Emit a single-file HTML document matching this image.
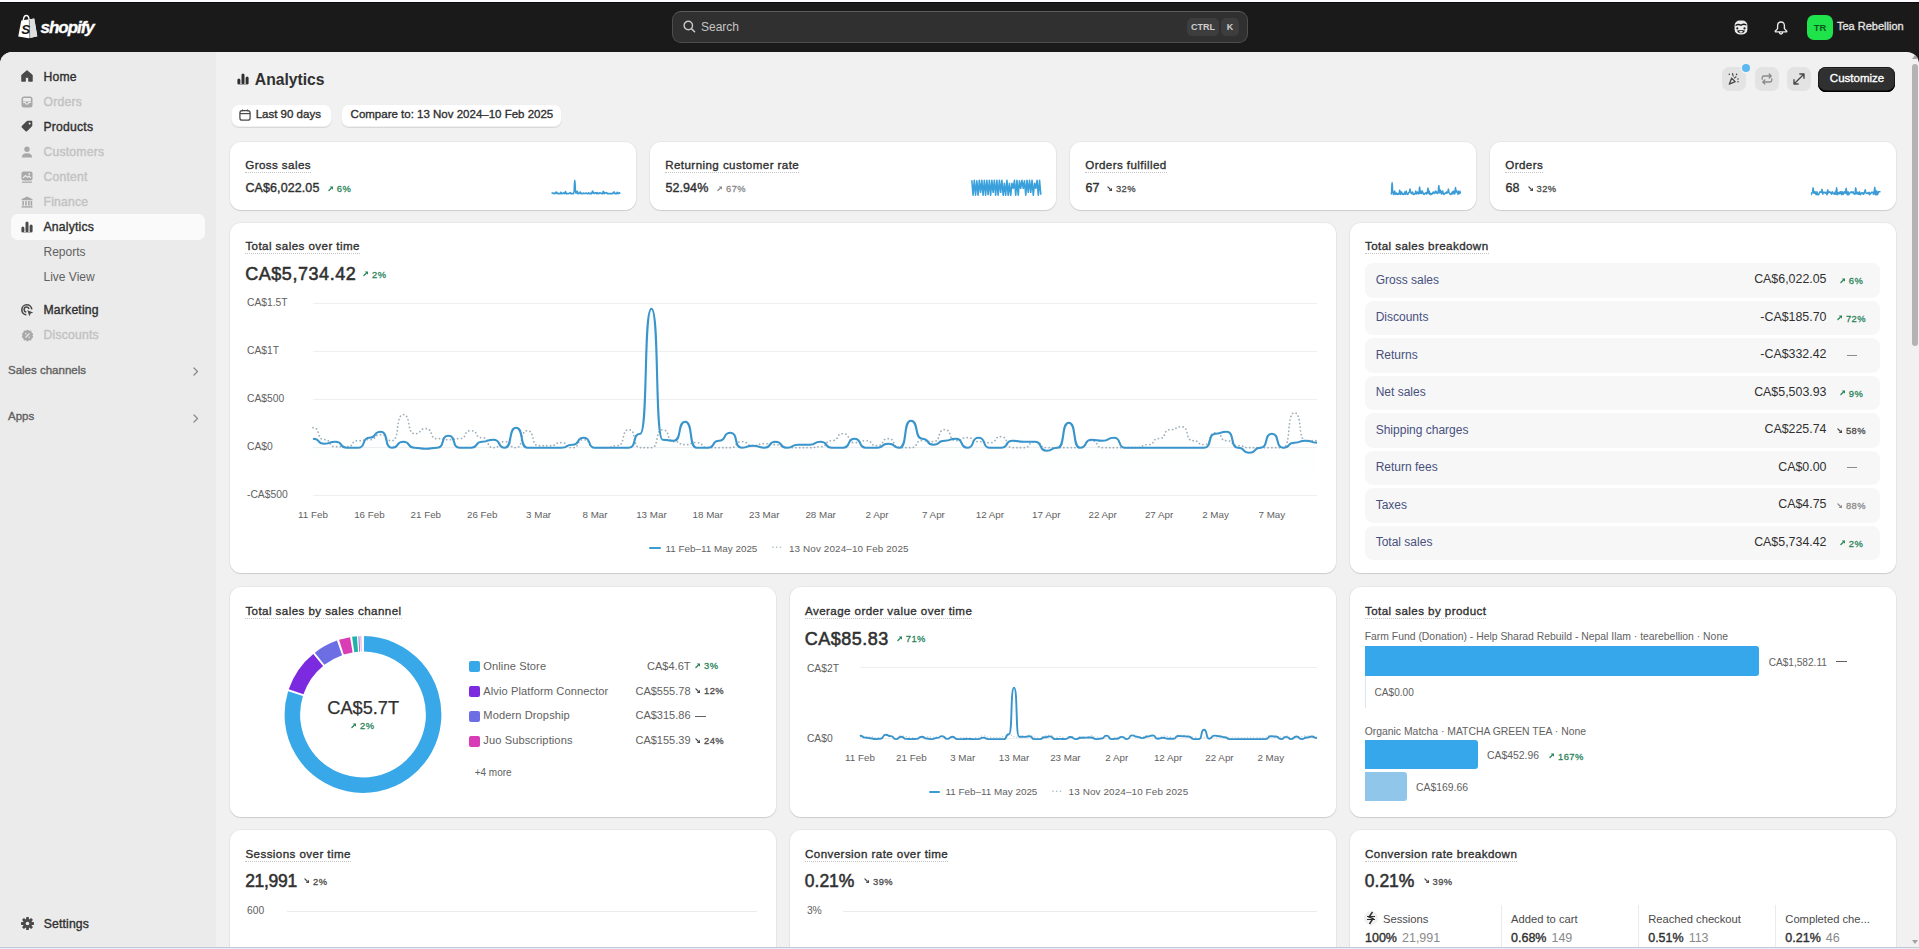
<!DOCTYPE html><html><head><meta charset="utf-8"><style>
*{box-sizing:border-box;margin:0;padding:0}
html,body{width:1919px;height:949px;overflow:hidden;background:#fcfbfd;font-family:"Liberation Sans",sans-serif;}
.t{position:absolute;line-height:1;white-space:nowrap}
.a{position:absolute}
.card{position:absolute;background:#fff;border-radius:11px;box-shadow:0 1px 0 rgba(26,26,26,.08),0 0 0 1px rgba(0,0,0,.035),0 1px 2px rgba(0,0,0,.05)}
.dot{border-bottom:1px dotted #c4c4c4;padding-bottom:1px}
.brow{position:absolute;left:1365px;width:515px;height:34px;background:#f7f7f7;border-radius:8px;box-shadow:0 1px 0 rgba(0,0,0,.03)}
svg{position:absolute;overflow:visible}
</style></head><body>
<div class="a" style="left:0;top:2px;width:1919px;height:50px;background:#1a1a1a;border-top:1px solid #0c0a0e"></div>
<div class="a" style="left:0;top:52px;width:1919px;height:897px;background:#1a1a1a"></div>
<div class="a" style="left:0;top:52px;width:1919px;height:897px;background:#f1f1f1;border-radius:12px 12px 0 0"></div>
<div class="a" style="left:0;top:52px;width:215.6px;height:897px;background:#ebebeb;border-radius:12px 0 0 0"></div>
<div class="a" style="left:1912px;top:64px;width:6px;height:282px;background:#b3b3b3;border-radius:3px"></div>
<div class="a" style="left:1912px;top:55px;width:0;height:0;border-left:3px solid transparent;border-right:3px solid transparent;border-bottom:4px solid #a3a3a3"></div>
<svg style="left:17px;top:14px" width="23" height="26" viewBox="0 0 23 26">
<path d="M1.2 22.4 L4.3 6.6 L17.2 4.6 L20.3 22.2 L11.9 24.3 Z" fill="#fff"/>
<path d="M12.6 5.6 L17.2 4.6 L20.3 22.2 L12.9 24.1 Z" fill="#dedede"/>
<path d="M12.3 5.5 L12.7 24.2" stroke="#1a1a1a" stroke-width="0.5"/>
<path d="M6.3 6.7 C6.5 3.3 7.8 1.5 9.4 1.5 C11 1.5 11.9 3.2 12.1 5.8" stroke="#fff" stroke-width="1.4" fill="none"/>
<text x="4.2" y="20.3" font-family="Liberation Sans" font-weight="700" font-style="italic" font-size="13.5" fill="#1a1a1a">S</text>
</svg>
<div class="t" style="left:40.6px;top:18.61px;font-size:17px;color:#fff;font-weight:700;font-style:italic;letter-spacing:-1.05px;-webkit-text-stroke:0.35px #fff">shopify</div>

<div class="a" style="left:672px;top:11px;width:576px;height:32px;background:#303030;border:1px solid #4d4d4d;border-top-color:#5c5c5c;border-radius:9px"></div>
<svg style="left:683px;top:20px" width="13" height="13" viewBox="0 0 13 13"><circle cx="5.3" cy="5.5" r="4.2" stroke="#c9c9c9" stroke-width="1.4" fill="none"/><path d="M8.4 8.6 L11.6 11.8" stroke="#c9c9c9" stroke-width="1.5" stroke-linecap="round"/></svg>
<div class="t" style="left:701px;top:20.84px;font-size:12px;color:#c4c4c4;font-weight:400;">Search</div>

<div class="a" style="left:1187px;top:18px;width:32px;height:18px;background:#3d3d3d;border-radius:5px"></div>
<div class="t" style="left:1203px;transform:translateX(-50%);top:22.88px;font-size:9px;color:#cfcfcf;font-weight:700;">CTRL</div>

<div class="a" style="left:1221px;top:18px;width:18px;height:18px;background:#3d3d3d;border-radius:5px"></div>
<div class="t" style="left:1230px;transform:translateX(-50%);top:22.88px;font-size:9px;color:#cfcfcf;font-weight:700;">K</div>

<svg style="left:1734px;top:19.5px" width="14" height="15" viewBox="0 0 14 15">
<rect x="0.6" y="0.6" width="12.8" height="13.8" rx="5" fill="#ececec"/>
<path d="M1.5 4.8 Q4 3 7 4.6 Q9.6 2.6 12.5 4.4 L12.5 5.6 Q9.6 4.2 7 5.9 Q4 4.4 1.5 6.2 Z" fill="#1a1a1a"/>
<circle cx="3.3" cy="8.4" r="1.05" fill="#1a1a1a"/><circle cx="10.5" cy="8.4" r="1.05" fill="#1a1a1a"/>
<path d="M3.2 10.6 Q7 9.6 10.8 10.6 Q10.4 13.2 7 13.2 Q3.6 13.2 3.2 10.6 Z" fill="#1a1a1a"/>
<ellipse cx="7" cy="11.7" rx="1.8" ry="1" fill="#ececec"/></svg>
<svg style="left:1773.5px;top:20.5px" width="14" height="14" viewBox="0 0 14 14">
<path d="M7 1 C4.9 1 3.6 2.6 3.6 4.7 L3.6 7.6 L1.4 10 C1 10.5 1.3 10.9 1.9 10.9 L12.1 10.9 C12.7 10.9 13 10.5 12.6 10 L10.4 7.6 L10.4 4.7 C10.4 2.6 9.1 1 7 1 Z" stroke="#e8e8e8" stroke-width="1.35" fill="none" stroke-linejoin="round"/>
<path d="M5.4 11 L5.4 11.6 Q5.4 13 7 13 Q8.6 13 8.6 11.6 L8.6 11" stroke="#e8e8e8" stroke-width="1.3" fill="none"/></svg>
<div class="a" style="left:1807px;top:15px;width:26px;height:25px;background:#1fe34a;border-radius:7px"></div>
<div class="t" style="left:1820px;transform:translateX(-50%);top:22.96px;font-size:9.5px;color:#0b5a1c;font-weight:700;">TR</div>

<div class="t" style="left:1837px;top:20.69px;font-size:11px;color:#e3e3e3;font-weight:400;-webkit-text-stroke:0.330px #e3e3e3;">Tea Rebellion</div>

<div class="a" style="left:11px;top:214px;width:194px;height:26px;background:#fafafa;border-radius:6.5px"></div>
<svg style="left:21px;top:70px" width="12" height="12" viewBox="0 0 12 12"><path d="M6 0.6 L11.3 5 L11.3 11.3 L7.6 11.3 L7.6 8 Q6 6.6 4.4 8 L4.4 11.3 L0.7 11.3 L0.7 5 Z" fill="#4a4a4a" stroke="#4a4a4a" stroke-width="0.8" stroke-linejoin="round"/></svg>
<div class="t" style="left:43.5px;top:70.57px;font-size:12.2px;color:#303030;font-weight:400;-webkit-text-stroke:0.366px #303030;letter-spacing:0.2px">Home</div>

<svg style="left:21px;top:96px" width="12" height="12" viewBox="0 0 12 12"><rect x="0.5" y="0.5" width="11" height="11" rx="2.5" fill="#a8a8a8"/><path d="M2 6.5 L4.2 6.5 L5 8 L7 8 L7.8 6.5 L10 6.5" stroke="#ebebeb" stroke-width="1.2" fill="none"/><rect x="2" y="2" width="8" height="3.5" fill="#ebebeb" rx="1"/></svg>
<div class="t" style="left:43.5px;top:95.57px;font-size:12.2px;color:#c2c2c2;font-weight:400;-webkit-text-stroke:0.366px #c2c2c2;letter-spacing:0.2px">Orders</div>

<svg style="left:21px;top:120px" width="12" height="12" viewBox="0 0 12 12"><path d="M6.6 0.8 L10.5 0.8 Q11.3 0.8 11.3 1.6 L11.3 5.4 Q11.3 6 10.8 6.5 L6 11.3 Q5.3 11.9 4.6 11.3 L0.8 7.5 Q0.2 6.8 0.8 6.1 L5.6 1.3 Q6 0.8 6.6 0.8 Z" fill="#4a4a4a"/><circle cx="8.6" cy="3.4" r="1" fill="#ebebeb"/></svg>
<div class="t" style="left:43.5px;top:120.57px;font-size:12.2px;color:#303030;font-weight:400;-webkit-text-stroke:0.366px #303030;letter-spacing:0.2px">Products</div>

<svg style="left:21px;top:146px" width="12" height="12" viewBox="0 0 12 12"><circle cx="6" cy="3.2" r="2.7" fill="#a8a8a8"/><path d="M0.8 11.5 Q1 7.3 6 7.3 Q11 7.3 11.2 11.5 Z" fill="#a8a8a8"/></svg>
<div class="t" style="left:43.5px;top:145.67px;font-size:12.2px;color:#c2c2c2;font-weight:400;-webkit-text-stroke:0.366px #c2c2c2;letter-spacing:0.2px">Customers</div>

<svg style="left:21px;top:171px" width="12" height="12" viewBox="0 0 12 12"><rect x="0.5" y="0.5" width="11" height="9" rx="2" fill="#a8a8a8"/><path d="M2 7 L4.5 4.5 L6.5 6.5 L8 5 L10 7" stroke="#ebebeb" stroke-width="1.1" fill="none"/><circle cx="8.3" cy="3" r="0.9" fill="#ebebeb"/><rect x="1" y="10.6" width="10" height="1.2" fill="#a8a8a8"/></svg>
<div class="t" style="left:43.5px;top:170.87px;font-size:12.2px;color:#c2c2c2;font-weight:400;-webkit-text-stroke:0.366px #c2c2c2;letter-spacing:0.2px">Content</div>

<svg style="left:21px;top:196px" width="12" height="12" viewBox="0 0 12 12"><path d="M6 0.5 L11.5 3.2 L11.5 4.3 L0.5 4.3 L0.5 3.2 Z" fill="#a8a8a8"/><rect x="1.3" y="5" width="1.6" height="4.6" fill="#a8a8a8"/><rect x="4.2" y="5" width="1.6" height="4.6" fill="#a8a8a8"/><rect x="7.1" y="5" width="1.6" height="4.6" fill="#a8a8a8"/><rect x="9.6" y="5" width="1.6" height="4.6" fill="#a8a8a8"/><rect x="0.5" y="10.2" width="11" height="1.4" fill="#a8a8a8"/></svg>
<div class="t" style="left:43.5px;top:195.87px;font-size:12.2px;color:#c2c2c2;font-weight:400;-webkit-text-stroke:0.366px #c2c2c2;letter-spacing:0.2px">Finance</div>

<svg style="left:21px;top:221px" width="12" height="12" viewBox="0 0 12 12"><rect x="0.4" y="5.6" width="3" height="6" rx="1.5" fill="#4a4a4a"/><rect x="4.5" y="0.4" width="3" height="11.2" rx="1.5" fill="#4a4a4a"/><rect x="8.6" y="3.4" width="3" height="8.2" rx="1.5" fill="#4a4a4a"/><path d="M3.4 11.4 L4.5 11.4 M7.5 11.4 L8.6 11.4" stroke="#4a4a4a" stroke-width="0.8"/></svg>
<div class="t" style="left:43.5px;top:220.87px;font-size:12.2px;color:#303030;font-weight:400;-webkit-text-stroke:0.366px #303030;letter-spacing:0.2px">Analytics</div>

<svg style="left:21px;top:304px" width="13" height="13" viewBox="0 0 13 13"><path d="M10.8 5.4 A5 5 0 1 0 5.4 10.8" stroke="#4a4a4a" stroke-width="1.6" fill="none"/><path d="M7.9 5.2 A2.4 2.4 0 1 0 5.3 7.9" stroke="#4a4a4a" stroke-width="1.5" fill="none"/><path d="M6.3 6.3 L12.3 8.4 L9.6 9.6 L8.4 12.3 Z" fill="#4a4a4a"/></svg>
<div class="t" style="left:43.5px;top:304.37px;font-size:12.2px;color:#303030;font-weight:400;-webkit-text-stroke:0.366px #303030;letter-spacing:0.2px">Marketing</div>

<svg style="left:21px;top:329px" width="13" height="13" viewBox="0 0 13 13"><path d="M6.5 0.5 L8.1 1.7 L10.1 1.6 L10.6 3.5 L12.2 4.7 L11.5 6.5 L12.2 8.3 L10.6 9.5 L10.1 11.4 L8.1 11.3 L6.5 12.5 L4.9 11.3 L2.9 11.4 L2.4 9.5 L0.8 8.3 L1.5 6.5 L0.8 4.7 L2.4 3.5 L2.9 1.6 L4.9 1.7 Z" fill="#a8a8a8"/><path d="M4.5 8.5 L8.5 4.5" stroke="#ebebeb" stroke-width="1.1"/><circle cx="4.8" cy="4.8" r="0.8" fill="#ebebeb"/><circle cx="8.2" cy="8.2" r="0.8" fill="#ebebeb"/></svg>
<div class="t" style="left:43.5px;top:329.07px;font-size:12.2px;color:#c2c2c2;font-weight:400;-webkit-text-stroke:0.366px #c2c2c2;letter-spacing:0.2px">Discounts</div>

<div class="t" style="left:43.5px;top:245.64px;font-size:12px;color:#616161;font-weight:400;">Reports</div>

<div class="t" style="left:43.5px;top:270.84px;font-size:12px;color:#616161;font-weight:400;">Live View</div>

<div class="t" style="left:8px;top:365.47px;font-size:11.5px;color:#616161;font-weight:400;-webkit-text-stroke:0.345px #616161;">Sales channels</div>

<div class="t" style="left:8px;top:411.37px;font-size:11.5px;color:#616161;font-weight:400;-webkit-text-stroke:0.345px #616161;">Apps</div>

<svg style="left:192px;top:367.0px" width="8" height="9" viewBox="0 0 8 9"><path d="M2 1 L5.5 4.5 L2 8" stroke="#8a8a8a" stroke-width="1.3" fill="none" stroke-linecap="round" stroke-linejoin="round"/></svg>
<svg style="left:192px;top:414.0px" width="8" height="9" viewBox="0 0 8 9"><path d="M2 1 L5.5 4.5 L2 8" stroke="#8a8a8a" stroke-width="1.3" fill="none" stroke-linecap="round" stroke-linejoin="round"/></svg>
<svg style="left:20.5px;top:916.5px" width="13" height="13" viewBox="0 0 13 13"><rect x="5.1" y="0" width="2.8" height="3" rx="0.6" fill="#4a4a4a" transform="rotate(0 6.5 6.5)"/><rect x="5.1" y="0" width="2.8" height="3" rx="0.6" fill="#4a4a4a" transform="rotate(45 6.5 6.5)"/><rect x="5.1" y="0" width="2.8" height="3" rx="0.6" fill="#4a4a4a" transform="rotate(90 6.5 6.5)"/><rect x="5.1" y="0" width="2.8" height="3" rx="0.6" fill="#4a4a4a" transform="rotate(135 6.5 6.5)"/><rect x="5.1" y="0" width="2.8" height="3" rx="0.6" fill="#4a4a4a" transform="rotate(180 6.5 6.5)"/><rect x="5.1" y="0" width="2.8" height="3" rx="0.6" fill="#4a4a4a" transform="rotate(225 6.5 6.5)"/><rect x="5.1" y="0" width="2.8" height="3" rx="0.6" fill="#4a4a4a" transform="rotate(270 6.5 6.5)"/><rect x="5.1" y="0" width="2.8" height="3" rx="0.6" fill="#4a4a4a" transform="rotate(315 6.5 6.5)"/><circle cx="6.5" cy="6.5" r="4.6" fill="#4a4a4a"/><circle cx="6.5" cy="6.5" r="1.8" fill="#ebebeb"/></svg>
<div class="t" style="left:43.75px;top:918.27px;font-size:12.2px;color:#303030;font-weight:400;-webkit-text-stroke:0.366px #303030;letter-spacing:0.15px">Settings</div>

<svg style="left:237px;top:73px" width="12" height="12" viewBox="0 0 12 12"><rect x="0.4" y="5.6" width="3" height="6" rx="1.5" fill="#303030"/><rect x="4.5" y="0.4" width="3" height="11.2" rx="1.5" fill="#303030"/><rect x="8.6" y="3.4" width="3" height="8.2" rx="1.5" fill="#303030"/><path d="M3.4 11.4 L4.5 11.4 M7.5 11.4 L8.6 11.4" stroke="#303030" stroke-width="0.8"/></svg>
<div class="t" style="left:254.8px;top:71.71px;font-size:15.7px;color:#303030;font-weight:700;">Analytics</div>

<div class="a" style="left:231px;top:104px;width:101px;height:23px;background:#fff;border-radius:8px;box-shadow:0 1px 0 rgba(0,0,0,.10),inset 0 0 0 1px rgba(0,0,0,.06)"></div>
<svg style="left:239px;top:108.5px" width="12" height="12" viewBox="0 0 12 12"><rect x="0.9" y="1.6" width="10.2" height="9.6" rx="2.3" stroke="#4a4a4a" stroke-width="1.25" fill="none"/><path d="M1 4.6 L11 4.6" stroke="#4a4a4a" stroke-width="1.2"/><path d="M3.5 0.5 L3.5 2.3 M8.5 0.5 L8.5 2.3" stroke="#4a4a4a" stroke-width="1.1"/></svg>
<div class="t" style="left:255.7px;top:108.87px;font-size:11.5px;color:#303030;font-weight:400;-webkit-text-stroke:0.345px #303030;">Last 90 days</div>

<div class="a" style="left:340.5px;top:104px;width:221px;height:23px;background:#fff;border-radius:8px;box-shadow:0 1px 0 rgba(0,0,0,.10),inset 0 0 0 1px rgba(0,0,0,.06)"></div>
<div class="t" style="left:350.6px;top:108.87px;font-size:11.5px;color:#303030;font-weight:400;-webkit-text-stroke:0.345px #303030;">Compare to: 13 Nov 2024&#8211;10 Feb 2025</div>

<div class="a" style="left:1722px;top:67px;width:23.5px;height:24px;background:#e3e3e3;border-radius:7px"></div>
<div class="a" style="left:1755px;top:67px;width:23.5px;height:24px;background:#e3e3e3;border-radius:7px"></div>
<div class="a" style="left:1787px;top:67px;width:23.5px;height:24px;background:#e3e3e3;border-radius:7px"></div>
<svg style="left:1727px;top:72px" width="14" height="14" viewBox="0 0 14 14"><path d="M2.3 12.2 L4.6 6.2 L8.2 9.6 Z" stroke="#4a4a4a" stroke-width="1.3" fill="none" stroke-linejoin="round"/><circle cx="2.3" cy="2.2" r="0.8" fill="#4a4a4a"/><circle cx="9.6" cy="2.4" r="0.8" fill="#4a4a4a"/><circle cx="11" cy="7" r="0.8" fill="#4a4a4a"/><circle cx="11" cy="9.8" r="0.8" fill="#4a4a4a"/><path d="M5.5 1.5 L6.2 4 M9 4.8 L7.3 6" stroke="#4a4a4a" stroke-width="1.1" stroke-linecap="round"/></svg>
<div class="a" style="left:1741.5px;top:63.5px;width:8px;height:8px;background:#5cb8f2;border-radius:50%;box-shadow:0 0 0 1.5px #f1f1f1"></div>
<svg style="left:1760px;top:72px" width="14" height="14" viewBox="0 0 14 14"><path d="M2.2 7.2 L2.2 5.8 Q2.2 4 4 4 L11 4 M9.2 2 L11.2 4 L9.2 6" stroke="#8a8a8a" stroke-width="1.3" fill="none" stroke-linecap="round" stroke-linejoin="round"/><path d="M11.8 6.8 L11.8 8.2 Q11.8 10 10 10 L3 10 M4.8 12 L2.8 10 L4.8 8" stroke="#8a8a8a" stroke-width="1.3" fill="none" stroke-linecap="round" stroke-linejoin="round"/></svg>
<svg style="left:1792px;top:72px" width="14" height="14" viewBox="0 0 14 14"><path d="M2 12 L12 2 M7.8 2 L12 2 L12 6.2 M2 7.8 L2 12 L6.2 12" stroke="#4a4a4a" stroke-width="1.4" fill="none" stroke-linecap="round" stroke-linejoin="round"/></svg>
<div class="a" style="left:1818.3px;top:67px;width:77px;height:24.5px;background:#303030;border-radius:8px;box-shadow:inset 0 -1.6px 0 #000,inset 0 0 0 1px #1a1a1a,inset 0 1.5px 0 rgba(255,255,255,.14)"></div>
<div class="t" style="left:1857px;transform:translateX(-50%);top:73.27px;font-size:11.5px;color:#fff;font-weight:400;-webkit-text-stroke:0.345px #fff;">Customize</div>

<div class="card" style="left:230px;top:142px;width:405.5px;height:67.5px"></div>
<div class="t" style="left:245.2px;top:159.38px;font-size:11.6px;color:#303030;font-weight:400;-webkit-text-stroke:0.348px #303030;letter-spacing:0.42px"><span class="dot">Gross sales</span></div>

<div class="t" style="left:245.4px;top:181.92px;font-size:12.5px;color:#303030;font-weight:400;-webkit-text-stroke:0.375px #303030;letter-spacing:0.1px">CA$6,022.05</div>

<svg style="left:327.8px;top:185.79999999999998px" width="5.4" height="5.4" viewBox="0 0 5.4 5.4"><path d="M0.9 4.50 L3.20 2.2" stroke="#29845a" stroke-width="1.25" fill="none" stroke-linecap="round"/><path d="M1.73 0.4 L5.00 0.4 L5.00 3.67 Z" fill="#29845a"/></svg>
<div class="t" style="left:336.8px;top:184.24px;font-size:9.4px;color:#29845a;font-weight:400;-webkit-text-stroke:0.282px #29845a;letter-spacing:0.45px">6%</div>

<div class="card" style="left:650px;top:142px;width:405.5px;height:67.5px"></div>
<div class="t" style="left:665.2px;top:159.38px;font-size:11.6px;color:#303030;font-weight:400;-webkit-text-stroke:0.348px #303030;letter-spacing:0.42px"><span class="dot">Returning customer rate</span></div>

<div class="t" style="left:665.4px;top:181.92px;font-size:12.5px;color:#303030;font-weight:400;-webkit-text-stroke:0.375px #303030;letter-spacing:0.1px">52.94%</div>

<svg style="left:717.0px;top:185.79999999999998px" width="5.4" height="5.4" viewBox="0 0 5.4 5.4"><path d="M0.9 4.50 L3.20 2.2" stroke="#8a8a8a" stroke-width="1.25" fill="none" stroke-linecap="round"/><path d="M1.73 0.4 L5.00 0.4 L5.00 3.67 Z" fill="#8a8a8a"/></svg>
<div class="t" style="left:726.0px;top:184.24px;font-size:9.4px;color:#8a8a8a;font-weight:400;-webkit-text-stroke:0.282px #8a8a8a;letter-spacing:0.45px">67%</div>

<div class="card" style="left:1070px;top:142px;width:405.5px;height:67.5px"></div>
<div class="t" style="left:1085.2px;top:159.38px;font-size:11.6px;color:#303030;font-weight:400;-webkit-text-stroke:0.348px #303030;letter-spacing:0.42px"><span class="dot">Orders fulfilled</span></div>

<div class="t" style="left:1085.4px;top:181.92px;font-size:12.5px;color:#303030;font-weight:400;-webkit-text-stroke:0.375px #303030;letter-spacing:0.1px">67</div>

<svg style="left:1106.9px;top:185.79999999999998px" width="5.4" height="5.4" viewBox="0 0 5.4 5.4"><path d="M0.9 0.9 L3.20 3.20" stroke="#4a4a4a" stroke-width="1.25" fill="none" stroke-linecap="round"/><path d="M1.73 5.00 L5.00 5.00 L5.00 1.73 Z" fill="#4a4a4a"/></svg>
<div class="t" style="left:1115.9px;top:184.24px;font-size:9.4px;color:#4a4a4a;font-weight:400;-webkit-text-stroke:0.282px #4a4a4a;letter-spacing:0.45px">32%</div>

<div class="card" style="left:1490px;top:142px;width:405.5px;height:67.5px"></div>
<div class="t" style="left:1505.2px;top:159.38px;font-size:11.6px;color:#303030;font-weight:400;-webkit-text-stroke:0.348px #303030;letter-spacing:0.42px"><span class="dot">Orders</span></div>

<div class="t" style="left:1505.4px;top:181.92px;font-size:12.5px;color:#303030;font-weight:400;-webkit-text-stroke:0.375px #303030;letter-spacing:0.1px">68</div>

<svg style="left:1527.5px;top:185.79999999999998px" width="5.4" height="5.4" viewBox="0 0 5.4 5.4"><path d="M0.9 0.9 L3.20 3.20" stroke="#4a4a4a" stroke-width="1.25" fill="none" stroke-linecap="round"/><path d="M1.73 5.00 L5.00 5.00 L5.00 1.73 Z" fill="#4a4a4a"/></svg>
<div class="t" style="left:1536.5px;top:184.24px;font-size:9.4px;color:#4a4a4a;font-weight:400;-webkit-text-stroke:0.282px #4a4a4a;letter-spacing:0.45px">32%</div>

<svg style="left:0;top:0" width="1919" height="949"><path d="M551.60,192.75C552.06,192.75 551.91,193.22 552.37,193.22C552.84,193.22 552.68,193.03 553.15,193.03C553.61,193.03 553.46,193.60 553.92,193.60C554.38,193.60 554.23,193.60 554.69,193.60C555.16,193.60 555.00,192.65 555.47,192.65C555.93,192.65 555.77,192.08 556.24,192.08C556.70,192.08 556.55,193.60 557.01,193.60C557.48,193.60 557.32,193.03 557.78,193.03C558.25,193.03 558.09,193.60 558.56,193.60C559.02,193.60 558.87,193.60 559.33,193.60C559.79,193.60 559.64,193.60 560.10,193.60C560.57,193.60 560.41,192.46 560.88,192.46C561.34,192.46 561.19,193.60 561.65,193.60C562.11,193.60 561.96,193.60 562.42,193.60C562.89,193.60 562.73,193.03 563.20,193.03C563.66,193.03 563.50,192.84 563.97,192.84C564.43,192.84 564.28,193.60 564.74,193.60C565.21,193.60 565.05,191.70 565.51,191.70C565.98,191.70 565.82,193.60 566.29,193.60C566.75,193.60 566.60,193.60 567.06,193.60C567.52,193.60 567.37,193.60 567.83,193.60C568.30,193.60 568.14,193.60 568.61,193.60C569.07,193.60 568.92,193.32 569.38,193.32C569.84,193.32 569.69,192.65 570.15,192.65C570.62,192.65 570.46,193.60 570.93,193.60C571.39,193.60 571.24,193.60 571.70,193.60C572.16,193.60 572.01,193.60 572.47,193.60C572.94,193.60 572.78,193.60 573.24,193.60C573.71,193.60 573.55,192.27 574.02,192.27C574.48,192.27 574.33,180.40 574.79,180.40C575.25,180.40 575.10,192.84 575.56,192.84C576.03,192.84 575.87,192.94 576.34,192.94C576.80,192.94 576.65,191.13 577.11,191.13C577.57,191.13 577.42,193.60 577.88,193.60C578.35,193.60 578.19,193.60 578.66,193.60C579.12,193.60 578.97,192.94 579.43,192.94C579.89,192.94 579.74,192.18 580.20,192.18C580.67,192.18 580.51,193.60 580.98,193.60C581.44,193.60 581.28,193.41 581.75,193.41C582.21,193.41 582.06,193.60 582.52,193.60C582.99,193.60 582.83,193.03 583.29,193.03C583.76,193.03 583.60,193.60 584.07,193.60C584.53,193.60 584.38,193.32 584.84,193.32C585.30,193.32 585.15,193.32 585.61,193.32C586.08,193.32 585.92,193.03 586.39,193.03C586.85,193.03 586.70,193.60 587.16,193.60C587.62,193.60 587.47,193.60 587.93,193.60C588.40,193.60 588.24,192.75 588.71,192.75C589.17,192.75 589.01,193.60 589.48,193.60C589.94,193.60 589.79,193.60 590.25,193.60C590.72,193.60 590.56,193.22 591.02,193.22C591.49,193.22 591.33,193.60 591.80,193.60C592.26,193.60 592.11,191.04 592.57,191.04C593.03,191.04 592.88,192.75 593.34,192.75C593.81,192.75 593.65,193.32 594.12,193.32C594.58,193.32 594.43,192.94 594.89,192.94C595.35,192.94 595.20,192.75 595.66,192.75C596.13,192.75 595.97,193.60 596.44,193.60C596.90,193.60 596.75,192.65 597.21,192.65C597.67,192.65 597.52,193.60 597.98,193.60C598.45,193.60 598.29,193.60 598.76,193.60C599.22,193.60 599.06,192.94 599.53,192.94C599.99,192.94 599.84,193.03 600.30,193.03C600.76,193.03 600.61,193.03 601.07,193.03C601.54,193.03 601.38,193.60 601.85,193.60C602.31,193.60 602.16,193.60 602.62,193.60C603.08,193.60 602.93,191.23 603.39,191.23C603.86,191.23 603.70,193.60 604.17,193.60C604.63,193.60 604.48,192.84 604.94,192.84C605.40,192.84 605.25,192.94 605.71,192.94C606.18,192.94 606.02,192.65 606.49,192.65C606.95,192.65 606.79,193.60 607.26,193.60C607.72,193.60 607.57,193.60 608.03,193.60C608.50,193.60 608.34,193.60 608.80,193.60C609.27,193.60 609.11,193.60 609.58,193.60C610.04,193.60 609.89,193.60 610.35,193.60C610.81,193.60 610.66,193.60 611.12,193.60C611.59,193.60 611.43,193.60 611.90,193.60C612.36,193.60 612.21,193.60 612.67,193.60C613.13,193.60 612.98,192.27 613.44,192.27C613.91,192.27 613.75,192.08 614.22,192.08C614.68,192.08 614.52,193.60 614.99,193.60C615.45,193.60 615.30,193.60 615.76,193.60C616.23,193.60 616.07,193.60 616.53,193.60C617.00,193.60 616.84,192.27 617.31,192.27C617.77,192.27 617.62,193.60 618.08,193.60C618.54,193.60 618.39,193.13 618.85,193.13C619.32,193.13 619.16,192.94 619.63,192.94C620.09,192.94 619.94,193.13 620.40,193.13" stroke="#3a9bd6" stroke-width="1.7" fill="none" stroke-linejoin="round"/></svg>
<svg style="left:0;top:0" width="1919" height="949"><path d="M971.80,180.30 L973.05,195.30 L974.31,180.30 L975.56,195.30 L976.82,180.80 L978.07,195.30 L979.33,180.30 L980.58,192.30 L981.84,180.30 L983.09,195.30 L984.35,180.30 L985.60,195.30 L986.85,180.30 L988.11,194.80 L989.36,180.30 L990.62,195.30 L991.87,180.30 L993.13,192.30 L994.38,180.30 L995.64,195.30 L996.89,180.30 L998.15,195.30 L999.40,180.30 L1000.65,192.30 L1001.91,180.30 L1003.16,195.30 L1004.42,183.30 L1005.67,195.30 L1006.93,180.30 L1008.18,195.30 L1009.44,183.30 L1010.69,195.30 L1011.95,183.30 L1013.20,188.30 L1014.45,180.30 L1015.71,195.30 L1016.96,180.30 L1018.22,195.30 L1019.47,180.80 L1020.73,188.30 L1021.98,180.30 L1023.24,188.30 L1024.49,180.80 L1025.75,195.30 L1027.00,180.30 L1028.25,192.30 L1029.51,180.30 L1030.76,192.30 L1032.02,180.30 L1033.27,195.30 L1034.53,183.30 L1035.78,188.30 L1037.04,180.30 L1038.29,195.30 L1039.55,180.30 L1040.80,194.80" stroke="#3aa0dc" stroke-width="1.6" fill="none" stroke-linejoin="round"/></svg>
<svg style="left:0;top:0" width="1919" height="949"><path d="M1390.80,193.00C1391.18,193.00 1391.06,194.00 1391.44,194.00C1391.82,194.00 1391.70,182.50 1392.08,182.50C1392.46,182.50 1392.34,191.00 1392.72,191.00C1393.11,191.00 1392.98,194.50 1393.36,194.50C1393.75,194.50 1393.62,194.50 1394.00,194.50C1394.39,194.50 1394.26,191.00 1394.64,191.00C1395.03,191.00 1394.90,193.50 1395.28,193.50C1395.67,193.50 1395.54,194.50 1395.92,194.50C1396.31,194.50 1396.18,193.00 1396.56,193.00C1396.95,193.00 1396.82,193.50 1397.20,193.50C1397.59,193.50 1397.46,194.50 1397.84,194.50C1398.23,194.50 1398.10,193.50 1398.48,193.50C1398.87,193.50 1398.74,194.00 1399.12,194.00C1399.51,194.00 1399.38,190.00 1399.77,190.00C1400.15,190.00 1400.02,194.50 1400.41,194.50C1400.79,194.50 1400.66,192.00 1401.05,192.00C1401.43,192.00 1401.30,192.00 1401.69,192.00C1402.07,192.00 1401.94,194.50 1402.33,194.50C1402.71,194.50 1402.58,194.00 1402.97,194.00C1403.35,194.00 1403.22,194.50 1403.61,194.50C1403.99,194.50 1403.86,193.50 1404.25,193.50C1404.63,193.50 1404.50,192.00 1404.89,192.00C1405.27,192.00 1405.14,194.50 1405.53,194.50C1405.91,194.50 1405.78,191.00 1406.17,191.00C1406.55,191.00 1406.42,193.50 1406.81,193.50C1407.19,193.50 1407.07,194.50 1407.45,194.50C1407.83,194.50 1407.71,194.00 1408.09,194.00C1408.47,194.00 1408.35,192.50 1408.73,192.50C1409.11,192.50 1408.99,192.50 1409.37,192.50C1409.75,192.50 1409.63,189.00 1410.01,189.00C1410.40,189.00 1410.27,192.00 1410.65,192.00C1411.04,192.00 1410.91,193.50 1411.29,193.50C1411.68,193.50 1411.55,193.50 1411.93,193.50C1412.32,193.50 1412.19,192.00 1412.57,192.00C1412.96,192.00 1412.83,194.50 1413.21,194.50C1413.60,194.50 1413.47,194.00 1413.85,194.00C1414.24,194.00 1414.11,194.50 1414.49,194.50C1414.88,194.50 1414.75,193.50 1415.13,193.50C1415.52,193.50 1415.39,191.00 1415.77,191.00C1416.16,191.00 1416.03,194.00 1416.41,194.00C1416.80,194.00 1416.67,193.00 1417.06,193.00C1417.44,193.00 1417.31,192.00 1417.70,192.00C1418.08,192.00 1417.95,194.00 1418.34,194.00C1418.72,194.00 1418.59,193.50 1418.98,193.50C1419.36,193.50 1419.23,187.00 1419.62,187.00C1420.00,187.00 1419.87,193.50 1420.26,193.50C1420.64,193.50 1420.51,191.00 1420.90,191.00C1421.28,191.00 1421.15,193.50 1421.54,193.50C1421.92,193.50 1421.79,191.00 1422.18,191.00C1422.56,191.00 1422.43,192.50 1422.82,192.50C1423.20,192.50 1423.07,194.00 1423.46,194.00C1423.84,194.00 1423.71,194.50 1424.10,194.50C1424.48,194.50 1424.36,193.50 1424.74,193.50C1425.12,193.50 1425.00,193.50 1425.38,193.50C1425.76,193.50 1425.64,192.50 1426.02,192.50C1426.40,192.50 1426.28,194.00 1426.66,194.00C1427.04,194.00 1426.92,193.00 1427.30,193.00C1427.69,193.00 1427.56,188.00 1427.94,188.00C1428.33,188.00 1428.20,193.50 1428.58,193.50C1428.97,193.50 1428.84,191.00 1429.22,191.00C1429.61,191.00 1429.48,194.50 1429.86,194.50C1430.25,194.50 1430.12,193.50 1430.50,193.50C1430.89,193.50 1430.76,194.50 1431.14,194.50C1431.53,194.50 1431.40,193.50 1431.78,193.50C1432.17,193.50 1432.04,194.00 1432.42,194.00C1432.81,194.00 1432.68,192.00 1433.06,192.00C1433.45,192.00 1433.32,192.50 1433.70,192.50C1434.09,192.50 1433.96,193.50 1434.34,193.50C1434.73,193.50 1434.60,192.00 1434.99,192.00C1435.37,192.00 1435.24,191.00 1435.63,191.00C1436.01,191.00 1435.88,193.00 1436.27,193.00C1436.65,193.00 1436.52,192.00 1436.91,192.00C1437.29,192.00 1437.16,193.50 1437.55,193.50C1437.93,193.50 1437.80,192.00 1438.19,192.00C1438.57,192.00 1438.44,185.50 1438.83,185.50C1439.21,185.50 1439.08,193.00 1439.47,193.00C1439.85,193.00 1439.72,190.00 1440.11,190.00C1440.49,190.00 1440.36,191.00 1440.75,191.00C1441.13,191.00 1441.00,194.00 1441.39,194.00C1441.77,194.00 1441.65,192.50 1442.03,192.50C1442.41,192.50 1442.29,191.00 1442.67,191.00C1443.05,191.00 1442.93,194.00 1443.31,194.00C1443.69,194.00 1443.57,194.50 1443.95,194.50C1444.33,194.50 1444.21,193.50 1444.59,193.50C1444.98,193.50 1444.85,193.00 1445.23,193.00C1445.62,193.00 1445.49,193.50 1445.87,193.50C1446.26,193.50 1446.13,192.00 1446.51,192.00C1446.90,192.00 1446.77,193.00 1447.15,193.00C1447.54,193.00 1447.41,192.50 1447.79,192.50C1448.18,192.50 1448.05,189.00 1448.43,189.00C1448.82,189.00 1448.69,193.00 1449.07,193.00C1449.46,193.00 1449.33,193.50 1449.71,193.50C1450.10,193.50 1449.97,194.50 1450.35,194.50C1450.74,194.50 1450.61,194.50 1450.99,194.50C1451.38,194.50 1451.25,193.50 1451.63,193.50C1452.02,193.50 1451.89,192.00 1452.28,192.00C1452.66,192.00 1452.53,194.00 1452.92,194.00C1453.30,194.00 1453.17,191.00 1453.56,191.00C1453.94,191.00 1453.81,193.00 1454.20,193.00C1454.58,193.00 1454.45,194.00 1454.84,194.00C1455.22,194.00 1455.09,187.50 1455.48,187.50C1455.86,187.50 1455.73,192.00 1456.12,192.00C1456.50,192.00 1456.37,191.00 1456.76,191.00C1457.14,191.00 1457.01,192.50 1457.40,192.50C1457.78,192.50 1457.65,194.50 1458.04,194.50C1458.42,194.50 1458.29,191.00 1458.68,191.00C1459.06,191.00 1458.94,193.50 1459.32,193.50C1459.70,193.50 1459.58,193.50 1459.96,193.50C1460.34,193.50 1460.22,191.00 1460.60,191.00" stroke="#3a9bd6" stroke-width="1.6" fill="none" stroke-linejoin="round"/></svg>
<svg style="left:0;top:0" width="1919" height="949"><path d="M1811.20,194.80C1811.58,194.80 1811.45,192.80 1811.84,192.80C1812.22,192.80 1812.09,192.80 1812.47,192.80C1812.85,192.80 1812.73,187.80 1813.11,187.80C1813.49,187.80 1813.36,192.80 1813.74,192.80C1814.12,192.80 1814.00,193.30 1814.38,193.30C1814.76,193.30 1814.63,191.80 1815.01,191.80C1815.40,191.80 1815.27,193.30 1815.65,193.30C1816.03,193.30 1815.90,194.80 1816.29,194.80C1816.67,194.80 1816.54,191.80 1816.92,191.80C1817.30,191.80 1817.18,194.30 1817.56,194.30C1817.94,194.30 1817.81,194.80 1818.19,194.80C1818.58,194.80 1818.45,194.30 1818.83,194.30C1819.21,194.30 1819.08,192.80 1819.47,192.80C1819.85,192.80 1819.72,191.80 1820.10,191.80C1820.48,191.80 1820.36,192.30 1820.74,192.30C1821.12,192.30 1820.99,192.30 1821.37,192.30C1821.75,192.30 1821.63,189.30 1822.01,189.30C1822.39,189.30 1822.26,194.30 1822.64,194.30C1823.03,194.30 1822.90,192.30 1823.28,192.30C1823.66,192.30 1823.53,192.30 1823.92,192.30C1824.30,192.30 1824.17,192.80 1824.55,192.80C1824.93,192.80 1824.81,192.30 1825.19,192.30C1825.57,192.30 1825.44,193.30 1825.82,193.30C1826.20,193.30 1826.08,192.30 1826.46,192.30C1826.84,192.30 1826.71,194.80 1827.09,194.80C1827.48,194.80 1827.35,189.80 1827.73,189.80C1828.11,189.80 1827.98,192.80 1828.37,192.80C1828.75,192.80 1828.62,192.30 1829.00,192.30C1829.38,192.30 1829.26,191.80 1829.64,191.80C1830.02,191.80 1829.89,192.30 1830.27,192.30C1830.65,192.30 1830.53,192.80 1830.91,192.80C1831.29,192.80 1831.16,194.30 1831.54,194.30C1831.93,194.30 1831.80,191.80 1832.18,191.80C1832.56,191.80 1832.44,192.80 1832.82,192.80C1833.20,192.80 1833.07,193.80 1833.45,193.80C1833.83,193.80 1833.71,193.30 1834.09,193.30C1834.47,193.30 1834.34,194.30 1834.72,194.30C1835.11,194.30 1834.98,191.80 1835.36,191.80C1835.74,191.80 1835.61,194.30 1836.00,194.30C1836.38,194.30 1836.25,187.80 1836.63,187.80C1837.01,187.80 1836.89,194.80 1837.27,194.80C1837.65,194.80 1837.52,192.80 1837.90,192.80C1838.28,192.80 1838.16,193.80 1838.54,193.80C1838.92,193.80 1838.79,192.30 1839.17,192.30C1839.56,192.30 1839.43,193.80 1839.81,193.80C1840.19,193.80 1840.06,191.80 1840.45,191.80C1840.83,191.80 1840.70,191.80 1841.08,191.80C1841.46,191.80 1841.34,194.80 1841.72,194.80C1842.10,194.80 1841.97,191.80 1842.35,191.80C1842.73,191.80 1842.61,194.30 1842.99,194.30C1843.37,194.30 1843.24,193.80 1843.62,193.80C1844.01,193.80 1843.88,191.80 1844.26,191.80C1844.64,191.80 1844.51,191.80 1844.90,191.80C1845.28,191.80 1845.15,193.30 1845.53,193.30C1845.91,193.30 1845.79,188.30 1846.17,188.30C1846.55,188.30 1846.42,193.80 1846.80,193.80C1847.19,193.80 1847.06,194.80 1847.44,194.80C1847.82,194.80 1847.69,191.80 1848.08,191.80C1848.46,191.80 1848.33,194.80 1848.71,194.80C1849.09,194.80 1848.97,193.30 1849.35,193.30C1849.73,193.30 1849.60,192.80 1849.98,192.80C1850.36,192.80 1850.24,192.30 1850.62,192.30C1851.00,192.30 1850.87,191.80 1851.25,191.80C1851.64,191.80 1851.51,192.80 1851.89,192.80C1852.27,192.80 1852.14,192.30 1852.53,192.30C1852.91,192.30 1852.78,191.80 1853.16,191.80C1853.54,191.80 1853.42,193.80 1853.80,193.80C1854.18,193.80 1854.05,193.80 1854.43,193.80C1854.81,193.80 1854.69,194.30 1855.07,194.30C1855.45,194.30 1855.32,187.80 1855.70,187.80C1856.09,187.80 1855.96,193.80 1856.34,193.80C1856.72,193.80 1856.59,193.80 1856.98,193.80C1857.36,193.80 1857.23,192.30 1857.61,192.30C1857.99,192.30 1857.87,193.80 1858.25,193.80C1858.63,193.80 1858.50,194.30 1858.88,194.30C1859.26,194.30 1859.14,191.80 1859.52,191.80C1859.90,191.80 1859.77,194.80 1860.16,194.80C1860.54,194.80 1860.41,193.30 1860.79,193.30C1861.17,193.30 1861.05,193.80 1861.43,193.80C1861.81,193.80 1861.68,192.80 1862.06,192.80C1862.44,192.80 1862.32,192.80 1862.70,192.80C1863.08,192.80 1862.95,194.30 1863.33,194.30C1863.72,194.30 1863.59,193.80 1863.97,193.80C1864.35,193.80 1864.22,191.80 1864.61,191.80C1864.99,191.80 1864.86,189.80 1865.24,189.80C1865.62,189.80 1865.50,192.80 1865.88,192.80C1866.26,192.80 1866.13,193.30 1866.51,193.30C1866.89,193.30 1866.77,193.30 1867.15,193.30C1867.53,193.30 1867.40,192.80 1867.78,192.80C1868.17,192.80 1868.04,193.80 1868.42,193.80C1868.80,193.80 1868.67,192.30 1869.06,192.30C1869.44,192.30 1869.31,194.80 1869.69,194.80C1870.07,194.80 1869.95,193.30 1870.33,193.30C1870.71,193.30 1870.58,193.30 1870.96,193.30C1871.34,193.30 1871.22,192.30 1871.60,192.30C1871.98,192.30 1871.85,192.30 1872.23,192.30C1872.62,192.30 1872.49,192.30 1872.87,192.30C1873.25,192.30 1873.12,194.30 1873.51,194.30C1873.89,194.30 1873.76,191.80 1874.14,191.80C1874.52,191.80 1874.40,187.30 1874.78,187.30C1875.16,187.30 1875.03,194.80 1875.41,194.80C1875.80,194.80 1875.67,194.80 1876.05,194.80C1876.43,194.80 1876.30,190.80 1876.69,190.80C1877.07,190.80 1876.94,194.80 1877.32,194.80C1877.70,194.80 1877.58,193.30 1877.96,193.30C1878.34,193.30 1878.21,191.80 1878.59,191.80C1878.97,191.80 1878.85,191.80 1879.23,191.80C1879.61,191.80 1879.48,191.80 1879.86,191.80C1880.25,191.80 1880.12,191.80 1880.50,191.80" stroke="#3a9bd6" stroke-width="1.6" fill="none" stroke-linejoin="round"/></svg>
<div class="card" style="left:230px;top:223px;width:1105.5px;height:350px"></div>
<div class="card" style="left:1350px;top:223px;width:545.5px;height:350px"></div>
<div class="t" style="left:245.4px;top:239.88px;font-size:11.6px;color:#303030;font-weight:400;-webkit-text-stroke:0.348px #303030;letter-spacing:0.42px"><span class="dot">Total sales over time</span></div>

<div class="t" style="left:245.2px;top:264.56px;font-size:18px;color:#303030;font-weight:400;-webkit-text-stroke:0.540px #303030;letter-spacing:0.55px">CA$5,734.42</div>

<svg style="left:363px;top:271.40000000000003px" width="5.4" height="5.4" viewBox="0 0 5.4 5.4"><path d="M0.9 4.50 L3.20 2.2" stroke="#29845a" stroke-width="1.25" fill="none" stroke-linecap="round"/><path d="M1.73 0.4 L5.00 0.4 L5.00 3.67 Z" fill="#29845a"/></svg>
<div class="t" style="left:372px;top:269.84px;font-size:9.4px;color:#29845a;font-weight:400;-webkit-text-stroke:0.282px #29845a;letter-spacing:0.45px">2%</div>

<div class="a" style="left:313.0px;top:302.90px;width:1004.0px;height:1px;background:#efefef"></div>
<div class="t" style="left:247px;top:298.08px;font-size:10.3px;color:#616161;font-weight:400;">CA$1.5T</div>

<div class="a" style="left:313.0px;top:351.00px;width:1004.0px;height:1px;background:#efefef"></div>
<div class="t" style="left:247px;top:346.18px;font-size:10.3px;color:#616161;font-weight:400;">CA$1T</div>

<div class="a" style="left:313.0px;top:399.10px;width:1004.0px;height:1px;background:#efefef"></div>
<div class="t" style="left:247px;top:394.28px;font-size:10.3px;color:#616161;font-weight:400;">CA$500</div>

<div class="a" style="left:313.0px;top:447.20px;width:1004.0px;height:1px;background:#efefef"></div>
<div class="t" style="left:247px;top:442.38px;font-size:10.3px;color:#616161;font-weight:400;">CA$0</div>

<div class="a" style="left:313.0px;top:495.30px;width:1004.0px;height:1px;background:#efefef"></div>
<div class="t" style="left:247px;top:490.48px;font-size:10.3px;color:#616161;font-weight:400;">-CA$500</div>

<div class="t" style="left:313.0px;transform:translateX(-50%);top:510.10px;font-size:9.8px;color:#616161;font-weight:400;">11 Feb</div>

<div class="t" style="left:369.40449438202245px;transform:translateX(-50%);top:510.10px;font-size:9.8px;color:#616161;font-weight:400;">16 Feb</div>

<div class="t" style="left:425.80898876404495px;transform:translateX(-50%);top:510.10px;font-size:9.8px;color:#616161;font-weight:400;">21 Feb</div>

<div class="t" style="left:482.2134831460674px;transform:translateX(-50%);top:510.10px;font-size:9.8px;color:#616161;font-weight:400;">26 Feb</div>

<div class="t" style="left:538.6179775280899px;transform:translateX(-50%);top:510.10px;font-size:9.8px;color:#616161;font-weight:400;">3 Mar</div>

<div class="t" style="left:595.0224719101124px;transform:translateX(-50%);top:510.10px;font-size:9.8px;color:#616161;font-weight:400;">8 Mar</div>

<div class="t" style="left:651.4269662921348px;transform:translateX(-50%);top:510.10px;font-size:9.8px;color:#616161;font-weight:400;">13 Mar</div>

<div class="t" style="left:707.8314606741574px;transform:translateX(-50%);top:510.10px;font-size:9.8px;color:#616161;font-weight:400;">18 Mar</div>

<div class="t" style="left:764.2359550561798px;transform:translateX(-50%);top:510.10px;font-size:9.8px;color:#616161;font-weight:400;">23 Mar</div>

<div class="t" style="left:820.6404494382023px;transform:translateX(-50%);top:510.10px;font-size:9.8px;color:#616161;font-weight:400;">28 Mar</div>

<div class="t" style="left:877.0449438202247px;transform:translateX(-50%);top:510.10px;font-size:9.8px;color:#616161;font-weight:400;">2 Apr</div>

<div class="t" style="left:933.4494382022472px;transform:translateX(-50%);top:510.10px;font-size:9.8px;color:#616161;font-weight:400;">7 Apr</div>

<div class="t" style="left:989.8539325842696px;transform:translateX(-50%);top:510.10px;font-size:9.8px;color:#616161;font-weight:400;">12 Apr</div>

<div class="t" style="left:1046.258426966292px;transform:translateX(-50%);top:510.10px;font-size:9.8px;color:#616161;font-weight:400;">17 Apr</div>

<div class="t" style="left:1102.6629213483147px;transform:translateX(-50%);top:510.10px;font-size:9.8px;color:#616161;font-weight:400;">22 Apr</div>

<div class="t" style="left:1159.067415730337px;transform:translateX(-50%);top:510.10px;font-size:9.8px;color:#616161;font-weight:400;">27 Apr</div>

<div class="t" style="left:1215.4719101123596px;transform:translateX(-50%);top:510.10px;font-size:9.8px;color:#616161;font-weight:400;">2 May</div>

<div class="t" style="left:1271.8764044943819px;transform:translateX(-50%);top:510.10px;font-size:9.8px;color:#616161;font-weight:400;">7 May</div>

<svg style="left:0;top:0" width="1919" height="949">
<defs><linearGradient id="ga" x1="0" y1="0" x2="0" y2="1"><stop offset="0" stop-color="#3a9bd2" stop-opacity="0.035"/><stop offset="1" stop-color="#3a9bd2" stop-opacity="0.0"/></linearGradient></defs>
<path d="M313.00,438.70C321.12,438.70 316.16,443.70 324.28,443.70C332.40,443.70 327.44,441.70 335.56,441.70C343.68,441.70 338.72,447.70 346.84,447.70C354.96,447.70 350.00,447.70 358.12,447.70C366.25,447.70 361.28,437.70 369.40,437.70C377.53,437.70 372.56,431.70 380.69,431.70C388.81,431.70 383.84,447.70 391.97,447.70C400.09,447.70 395.12,441.70 403.25,441.70C411.37,441.70 406.41,447.70 414.53,447.70C422.65,447.70 417.69,448.70 425.81,448.70C433.93,448.70 428.97,447.70 437.09,447.70C445.21,447.70 440.25,435.70 448.37,435.70C456.49,435.70 451.53,447.70 459.65,447.70C467.77,447.70 462.81,447.70 470.93,447.70C479.05,447.70 474.09,441.70 482.21,441.70C490.34,441.70 485.37,439.70 493.49,439.70C501.62,439.70 496.65,447.70 504.78,447.70C512.90,447.70 507.93,427.70 516.06,427.70C524.18,427.70 519.21,447.70 527.34,447.70C535.46,447.70 530.50,447.70 538.62,447.70C546.74,447.70 541.78,447.70 549.90,447.70C558.02,447.70 553.06,447.70 561.18,447.70C569.30,447.70 564.34,444.70 572.46,444.70C580.58,444.70 575.62,437.70 583.74,437.70C591.86,437.70 586.90,447.70 595.02,447.70C603.14,447.70 598.18,447.70 606.30,447.70C614.43,447.70 609.46,447.70 617.58,447.70C625.71,447.70 620.74,447.70 628.87,447.70C636.99,447.70 632.02,433.70 640.15,433.70C648.27,433.70 643.30,308.70 651.43,308.70C659.55,308.70 654.59,439.70 662.71,439.70C670.83,439.70 665.87,440.70 673.99,440.70C682.11,440.70 677.15,421.70 685.27,421.70C693.39,421.70 688.43,447.70 696.55,447.70C704.67,447.70 699.71,447.70 707.83,447.70C715.95,447.70 710.99,440.70 719.11,440.70C727.23,440.70 722.27,432.70 730.39,432.70C738.52,432.70 733.55,447.70 741.67,447.70C749.80,447.70 744.83,445.70 752.96,445.70C761.08,445.70 756.11,447.70 764.24,447.70C772.36,447.70 767.39,441.70 775.52,441.70C783.64,441.70 778.68,447.70 786.80,447.70C794.92,447.70 789.96,444.70 798.08,444.70C806.20,444.70 801.24,444.70 809.36,444.70C817.48,444.70 812.52,441.70 820.64,441.70C828.76,441.70 823.80,447.70 831.92,447.70C840.04,447.70 835.08,447.70 843.20,447.70C851.32,447.70 846.36,438.70 854.48,438.70C862.61,438.70 857.64,447.70 865.76,447.70C873.89,447.70 868.92,447.70 877.04,447.70C885.17,447.70 880.20,443.70 888.33,443.70C896.45,443.70 891.48,447.70 899.61,447.70C907.73,447.70 902.77,420.70 910.89,420.70C919.01,420.70 914.05,438.70 922.17,438.70C930.29,438.70 925.33,444.70 933.45,444.70C941.57,444.70 936.61,440.70 944.73,440.70C952.85,440.70 947.89,438.70 956.01,438.70C964.13,438.70 959.17,447.70 967.29,447.70C975.41,447.70 970.45,437.70 978.57,437.70C986.70,437.70 981.73,447.70 989.85,447.70C997.98,447.70 993.01,447.70 1001.13,447.70C1009.26,447.70 1004.29,440.70 1012.42,440.70C1020.54,440.70 1015.57,441.70 1023.70,441.70C1031.82,441.70 1026.86,441.70 1034.98,441.70C1043.10,441.70 1038.14,450.70 1046.26,450.70C1054.38,450.70 1049.42,447.70 1057.54,447.70C1065.66,447.70 1060.70,422.70 1068.82,422.70C1076.94,422.70 1071.98,447.70 1080.10,447.70C1088.22,447.70 1083.26,439.70 1091.38,439.70C1099.50,439.70 1094.54,440.70 1102.66,440.70C1110.79,440.70 1105.82,437.70 1113.94,437.70C1122.07,437.70 1117.10,447.70 1125.22,447.70C1133.35,447.70 1128.38,447.70 1136.51,447.70C1144.63,447.70 1139.66,447.70 1147.79,447.70C1155.91,447.70 1150.95,447.70 1159.07,447.70C1167.19,447.70 1162.23,447.70 1170.35,447.70C1178.47,447.70 1173.51,447.70 1181.63,447.70C1189.75,447.70 1184.79,447.70 1192.91,447.70C1201.03,447.70 1196.07,447.70 1204.19,447.70C1212.31,447.70 1207.35,433.70 1215.47,433.70C1223.59,433.70 1218.63,431.70 1226.75,431.70C1234.88,431.70 1229.91,447.70 1238.03,447.70C1246.16,447.70 1241.19,452.70 1249.31,452.70C1257.44,452.70 1252.47,447.70 1260.60,447.70C1268.72,447.70 1263.75,433.70 1271.88,433.70C1280.00,433.70 1275.04,447.70 1283.16,447.70C1291.28,447.70 1286.32,442.70 1294.44,442.70C1302.56,442.70 1297.60,440.70 1305.72,440.70C1313.84,440.70 1308.88,442.70 1317.00,442.70 L1317.0,497.7 L313.0,497.7 Z" fill="url(#ga)"/>
<path d="M313.00,427.70C321.12,427.70 316.16,439.70 324.28,439.70C332.40,439.70 327.44,446.70 335.56,446.70C343.68,446.70 338.72,446.70 346.84,446.70C354.96,446.70 350.00,440.70 358.12,440.70C366.25,440.70 361.28,439.70 369.40,439.70C377.53,439.70 372.56,434.70 380.69,434.70C388.81,434.70 383.84,440.70 391.97,440.70C400.09,440.70 395.12,414.70 403.25,414.70C411.37,414.70 406.41,433.70 414.53,433.70C422.65,433.70 417.69,428.70 425.81,428.70C433.93,428.70 428.97,438.70 437.09,438.70C445.21,438.70 440.25,439.70 448.37,439.70C456.49,439.70 451.53,438.70 459.65,438.70C467.77,438.70 462.81,430.70 470.93,430.70C479.05,430.70 474.09,437.70 482.21,437.70C490.34,437.70 485.37,447.70 493.49,447.70C501.62,447.70 496.65,441.70 504.78,441.70C512.90,441.70 507.93,447.70 516.06,447.70C524.18,447.70 519.21,430.70 527.34,430.70C535.46,430.70 530.50,445.70 538.62,445.70C546.74,445.70 541.78,445.70 549.90,445.70C558.02,445.70 553.06,442.70 561.18,442.70C569.30,442.70 564.34,447.70 572.46,447.70C580.58,447.70 575.62,439.70 583.74,439.70C591.86,439.70 586.90,447.70 595.02,447.70C603.14,447.70 598.18,447.70 606.30,447.70C614.43,447.70 609.46,445.70 617.58,445.70C625.71,445.70 620.74,429.70 628.87,429.70C636.99,429.70 632.02,447.70 640.15,447.70C648.27,447.70 643.30,447.70 651.43,447.70C659.55,447.70 654.59,429.70 662.71,429.70C670.83,429.70 665.87,441.70 673.99,441.70C682.11,441.70 677.15,444.70 685.27,444.70C693.39,444.70 688.43,442.70 696.55,442.70C704.67,442.70 699.71,447.70 707.83,447.70C715.95,447.70 710.99,447.70 719.11,447.70C727.23,447.70 722.27,447.70 730.39,447.70C738.52,447.70 733.55,441.70 741.67,441.70C749.80,441.70 744.83,445.70 752.96,445.70C761.08,445.70 756.11,443.70 764.24,443.70C772.36,443.70 767.39,444.70 775.52,444.70C783.64,444.70 778.68,447.70 786.80,447.70C794.92,447.70 789.96,447.70 798.08,447.70C806.20,447.70 801.24,447.70 809.36,447.70C817.48,447.70 812.52,446.70 820.64,446.70C828.76,446.70 823.80,440.70 831.92,440.70C840.04,440.70 835.08,433.70 843.20,433.70C851.32,433.70 846.36,442.70 854.48,442.70C862.61,442.70 857.64,440.70 865.76,440.70C873.89,440.70 868.92,445.70 877.04,445.70C885.17,445.70 880.20,438.70 888.33,438.70C896.45,438.70 891.48,447.70 899.61,447.70C907.73,447.70 902.77,447.70 910.89,447.70C919.01,447.70 914.05,440.70 922.17,440.70C930.29,440.70 925.33,441.70 933.45,441.70C941.57,441.70 936.61,429.70 944.73,429.70C952.85,429.70 947.89,440.70 956.01,440.70C964.13,440.70 959.17,437.70 967.29,437.70C975.41,437.70 970.45,441.70 978.57,441.70C986.70,441.70 981.73,442.70 989.85,442.70C997.98,442.70 993.01,436.70 1001.13,436.70C1009.26,436.70 1004.29,447.70 1012.42,447.70C1020.54,447.70 1015.57,447.70 1023.70,447.70C1031.82,447.70 1026.86,441.70 1034.98,441.70C1043.10,441.70 1038.14,447.70 1046.26,447.70C1054.38,447.70 1049.42,447.70 1057.54,447.70C1065.66,447.70 1060.70,447.70 1068.82,447.70C1076.94,447.70 1071.98,447.70 1080.10,447.70C1088.22,447.70 1083.26,440.70 1091.38,440.70C1099.50,440.70 1094.54,447.70 1102.66,447.70C1110.79,447.70 1105.82,447.70 1113.94,447.70C1122.07,447.70 1117.10,447.70 1125.22,447.70C1133.35,447.70 1128.38,447.70 1136.51,447.70C1144.63,447.70 1139.66,444.70 1147.79,444.70C1155.91,444.70 1150.95,438.70 1159.07,438.70C1167.19,438.70 1162.23,429.70 1170.35,429.70C1178.47,429.70 1173.51,426.70 1181.63,426.70C1189.75,426.70 1184.79,440.70 1192.91,440.70C1201.03,440.70 1196.07,444.70 1204.19,444.70C1212.31,444.70 1207.35,432.70 1215.47,432.70C1223.59,432.70 1218.63,440.70 1226.75,440.70C1234.88,440.70 1229.91,445.70 1238.03,445.70C1246.16,445.70 1241.19,447.70 1249.31,447.70C1257.44,447.70 1252.47,447.70 1260.60,447.70C1268.72,447.70 1263.75,447.70 1271.88,447.70C1280.00,447.70 1275.04,447.70 1283.16,447.70C1291.28,447.70 1286.32,412.70 1294.44,412.70C1302.56,412.70 1297.60,440.70 1305.72,440.70C1313.84,440.70 1308.88,440.70 1317.00,440.70" stroke="#9fb0ba" stroke-width="1.75" fill="none" stroke-dasharray="0.1 3.6" stroke-linecap="round"/>
<path d="M313.00,438.70C321.12,438.70 316.16,443.70 324.28,443.70C332.40,443.70 327.44,441.70 335.56,441.70C343.68,441.70 338.72,447.70 346.84,447.70C354.96,447.70 350.00,447.70 358.12,447.70C366.25,447.70 361.28,437.70 369.40,437.70C377.53,437.70 372.56,431.70 380.69,431.70C388.81,431.70 383.84,447.70 391.97,447.70C400.09,447.70 395.12,441.70 403.25,441.70C411.37,441.70 406.41,447.70 414.53,447.70C422.65,447.70 417.69,448.70 425.81,448.70C433.93,448.70 428.97,447.70 437.09,447.70C445.21,447.70 440.25,435.70 448.37,435.70C456.49,435.70 451.53,447.70 459.65,447.70C467.77,447.70 462.81,447.70 470.93,447.70C479.05,447.70 474.09,441.70 482.21,441.70C490.34,441.70 485.37,439.70 493.49,439.70C501.62,439.70 496.65,447.70 504.78,447.70C512.90,447.70 507.93,427.70 516.06,427.70C524.18,427.70 519.21,447.70 527.34,447.70C535.46,447.70 530.50,447.70 538.62,447.70C546.74,447.70 541.78,447.70 549.90,447.70C558.02,447.70 553.06,447.70 561.18,447.70C569.30,447.70 564.34,444.70 572.46,444.70C580.58,444.70 575.62,437.70 583.74,437.70C591.86,437.70 586.90,447.70 595.02,447.70C603.14,447.70 598.18,447.70 606.30,447.70C614.43,447.70 609.46,447.70 617.58,447.70C625.71,447.70 620.74,447.70 628.87,447.70C636.99,447.70 632.02,433.70 640.15,433.70C648.27,433.70 643.30,308.70 651.43,308.70C659.55,308.70 654.59,439.70 662.71,439.70C670.83,439.70 665.87,440.70 673.99,440.70C682.11,440.70 677.15,421.70 685.27,421.70C693.39,421.70 688.43,447.70 696.55,447.70C704.67,447.70 699.71,447.70 707.83,447.70C715.95,447.70 710.99,440.70 719.11,440.70C727.23,440.70 722.27,432.70 730.39,432.70C738.52,432.70 733.55,447.70 741.67,447.70C749.80,447.70 744.83,445.70 752.96,445.70C761.08,445.70 756.11,447.70 764.24,447.70C772.36,447.70 767.39,441.70 775.52,441.70C783.64,441.70 778.68,447.70 786.80,447.70C794.92,447.70 789.96,444.70 798.08,444.70C806.20,444.70 801.24,444.70 809.36,444.70C817.48,444.70 812.52,441.70 820.64,441.70C828.76,441.70 823.80,447.70 831.92,447.70C840.04,447.70 835.08,447.70 843.20,447.70C851.32,447.70 846.36,438.70 854.48,438.70C862.61,438.70 857.64,447.70 865.76,447.70C873.89,447.70 868.92,447.70 877.04,447.70C885.17,447.70 880.20,443.70 888.33,443.70C896.45,443.70 891.48,447.70 899.61,447.70C907.73,447.70 902.77,420.70 910.89,420.70C919.01,420.70 914.05,438.70 922.17,438.70C930.29,438.70 925.33,444.70 933.45,444.70C941.57,444.70 936.61,440.70 944.73,440.70C952.85,440.70 947.89,438.70 956.01,438.70C964.13,438.70 959.17,447.70 967.29,447.70C975.41,447.70 970.45,437.70 978.57,437.70C986.70,437.70 981.73,447.70 989.85,447.70C997.98,447.70 993.01,447.70 1001.13,447.70C1009.26,447.70 1004.29,440.70 1012.42,440.70C1020.54,440.70 1015.57,441.70 1023.70,441.70C1031.82,441.70 1026.86,441.70 1034.98,441.70C1043.10,441.70 1038.14,450.70 1046.26,450.70C1054.38,450.70 1049.42,447.70 1057.54,447.70C1065.66,447.70 1060.70,422.70 1068.82,422.70C1076.94,422.70 1071.98,447.70 1080.10,447.70C1088.22,447.70 1083.26,439.70 1091.38,439.70C1099.50,439.70 1094.54,440.70 1102.66,440.70C1110.79,440.70 1105.82,437.70 1113.94,437.70C1122.07,437.70 1117.10,447.70 1125.22,447.70C1133.35,447.70 1128.38,447.70 1136.51,447.70C1144.63,447.70 1139.66,447.70 1147.79,447.70C1155.91,447.70 1150.95,447.70 1159.07,447.70C1167.19,447.70 1162.23,447.70 1170.35,447.70C1178.47,447.70 1173.51,447.70 1181.63,447.70C1189.75,447.70 1184.79,447.70 1192.91,447.70C1201.03,447.70 1196.07,447.70 1204.19,447.70C1212.31,447.70 1207.35,433.70 1215.47,433.70C1223.59,433.70 1218.63,431.70 1226.75,431.70C1234.88,431.70 1229.91,447.70 1238.03,447.70C1246.16,447.70 1241.19,452.70 1249.31,452.70C1257.44,452.70 1252.47,447.70 1260.60,447.70C1268.72,447.70 1263.75,433.70 1271.88,433.70C1280.00,433.70 1275.04,447.70 1283.16,447.70C1291.28,447.70 1286.32,442.70 1294.44,442.70C1302.56,442.70 1297.60,440.70 1305.72,440.70C1313.84,440.70 1308.88,442.70 1317.00,442.70" stroke="#3994cb" stroke-width="2.1" fill="none"/>
</svg>
<div class="a" style="left:649px;top:547px;width:11.5px;height:2px;background:#3a9bd2;border-radius:1px"></div>
<div class="t" style="left:665.5px;top:544.22px;font-size:9.9px;color:#616161;font-weight:400;">11 Feb&#8211;11 May 2025</div>

<svg style="left:772px;top:546px" width="12" height="3"><path d="M1 1.2 L11 1.2" stroke="#a9bcc7" stroke-width="1.6" stroke-dasharray="0.1 3.6" stroke-linecap="round"/></svg>
<div class="t" style="left:789px;top:544.22px;font-size:9.9px;color:#616161;font-weight:400;letter-spacing:0.12px">13 Nov 2024&#8211;10 Feb 2025</div>

<div class="t" style="left:1365px;top:240.18px;font-size:11.6px;color:#303030;font-weight:400;-webkit-text-stroke:0.348px #303030;letter-spacing:0.42px"><span class="dot">Total sales breakdown</span></div>

<div class="brow" style="top:263.0px;height:33.7px"></div>
<div class="t" style="left:1375.7px;top:273.54px;font-size:12px;color:#48507e;font-weight:400;">Gross sales</div>

<div class="t" style="right:92.5px;top:273.20px;font-size:12.4px;color:#303030;font-weight:400;">CA$6,022.05</div>

<svg style="left:1839.7585px;top:277.6px" width="5.4" height="5.4" viewBox="0 0 5.4 5.4"><path d="M0.9 4.50 L3.20 2.2" stroke="#29845a" stroke-width="1.25" fill="none" stroke-linecap="round"/><path d="M1.73 0.4 L5.00 0.4 L5.00 3.67 Z" fill="#29845a"/></svg>
<div class="t" style="left:1848.7585px;top:276.04px;font-size:9.4px;color:#29845a;font-weight:400;-webkit-text-stroke:0.282px #29845a;letter-spacing:0.45px">6%</div>

<div class="brow" style="top:300.5px;height:33.7px"></div>
<div class="t" style="left:1375.7px;top:311.04px;font-size:12px;color:#48507e;font-weight:400;">Discounts</div>

<div class="t" style="right:92.5px;top:310.70px;font-size:12.4px;color:#303030;font-weight:400;">-CA$185.70</div>

<svg style="left:1836.9203px;top:315.1px" width="5.4" height="5.4" viewBox="0 0 5.4 5.4"><path d="M0.9 4.50 L3.20 2.2" stroke="#29845a" stroke-width="1.25" fill="none" stroke-linecap="round"/><path d="M1.73 0.4 L5.00 0.4 L5.00 3.67 Z" fill="#29845a"/></svg>
<div class="t" style="left:1845.9203px;top:313.54px;font-size:9.4px;color:#29845a;font-weight:400;-webkit-text-stroke:0.282px #29845a;letter-spacing:0.45px">72%</div>

<div class="brow" style="top:338.0px;height:33.7px"></div>
<div class="t" style="left:1375.7px;top:348.54px;font-size:12px;color:#48507e;font-weight:400;">Returns</div>

<div class="t" style="right:92.5px;top:348.20px;font-size:12.4px;color:#303030;font-weight:400;">-CA$332.42</div>

<div class="a" style="left:1846.5px;top:354.50px;width:10px;height:1.3px;background:#8a8a8a"></div>
<div class="brow" style="top:375.5px;height:33.7px"></div>
<div class="t" style="left:1375.7px;top:386.04px;font-size:12px;color:#48507e;font-weight:400;">Net sales</div>

<div class="t" style="right:92.5px;top:385.70px;font-size:12.4px;color:#303030;font-weight:400;">CA$5,503.93</div>

<svg style="left:1839.7585px;top:390.1px" width="5.4" height="5.4" viewBox="0 0 5.4 5.4"><path d="M0.9 4.50 L3.20 2.2" stroke="#29845a" stroke-width="1.25" fill="none" stroke-linecap="round"/><path d="M1.73 0.4 L5.00 0.4 L5.00 3.67 Z" fill="#29845a"/></svg>
<div class="t" style="left:1848.7585px;top:388.54px;font-size:9.4px;color:#29845a;font-weight:400;-webkit-text-stroke:0.282px #29845a;letter-spacing:0.45px">9%</div>

<div class="brow" style="top:413.0px;height:33.7px"></div>
<div class="t" style="left:1375.7px;top:423.54px;font-size:12px;color:#48507e;font-weight:400;">Shipping charges</div>

<div class="t" style="right:92.5px;top:423.20px;font-size:12.4px;color:#303030;font-weight:400;">CA$225.74</div>

<svg style="left:1836.9203px;top:427.6px" width="5.4" height="5.4" viewBox="0 0 5.4 5.4"><path d="M0.9 0.9 L3.20 3.20" stroke="#4a4a4a" stroke-width="1.25" fill="none" stroke-linecap="round"/><path d="M1.73 5.00 L5.00 5.00 L5.00 1.73 Z" fill="#4a4a4a"/></svg>
<div class="t" style="left:1845.9203px;top:426.04px;font-size:9.4px;color:#4a4a4a;font-weight:400;-webkit-text-stroke:0.282px #4a4a4a;letter-spacing:0.45px">58%</div>

<div class="brow" style="top:450.5px;height:33.7px"></div>
<div class="t" style="left:1375.7px;top:461.04px;font-size:12px;color:#48507e;font-weight:400;">Return fees</div>

<div class="t" style="right:92.5px;top:460.70px;font-size:12.4px;color:#303030;font-weight:400;">CA$0.00</div>

<div class="a" style="left:1846.5px;top:467.00px;width:10px;height:1.3px;background:#8a8a8a"></div>
<div class="brow" style="top:488.0px;height:33.7px"></div>
<div class="t" style="left:1375.7px;top:498.54px;font-size:12px;color:#48507e;font-weight:400;">Taxes</div>

<div class="t" style="right:92.5px;top:498.20px;font-size:12.4px;color:#303030;font-weight:400;">CA$4.75</div>

<svg style="left:1836.9203px;top:502.6px" width="5.4" height="5.4" viewBox="0 0 5.4 5.4"><path d="M0.9 0.9 L3.20 3.20" stroke="#8a8a8a" stroke-width="1.25" fill="none" stroke-linecap="round"/><path d="M1.73 5.00 L5.00 5.00 L5.00 1.73 Z" fill="#8a8a8a"/></svg>
<div class="t" style="left:1845.9203px;top:501.04px;font-size:9.4px;color:#8a8a8a;font-weight:400;-webkit-text-stroke:0.282px #8a8a8a;letter-spacing:0.45px">88%</div>

<div class="brow" style="top:525.5px;height:33.7px"></div>
<div class="t" style="left:1375.7px;top:536.04px;font-size:12px;color:#48507e;font-weight:400;">Total sales</div>

<div class="t" style="right:92.5px;top:535.70px;font-size:12.4px;color:#303030;font-weight:400;">CA$5,734.42</div>

<svg style="left:1839.7585px;top:540.1px" width="5.4" height="5.4" viewBox="0 0 5.4 5.4"><path d="M0.9 4.50 L3.20 2.2" stroke="#29845a" stroke-width="1.25" fill="none" stroke-linecap="round"/><path d="M1.73 0.4 L5.00 0.4 L5.00 3.67 Z" fill="#29845a"/></svg>
<div class="t" style="left:1848.7585px;top:538.54px;font-size:9.4px;color:#29845a;font-weight:400;-webkit-text-stroke:0.282px #29845a;letter-spacing:0.45px">2%</div>

<div class="card" style="left:230px;top:586.5px;width:545.5px;height:230px"></div>
<div class="card" style="left:790px;top:586.5px;width:545.5px;height:230px"></div>
<div class="card" style="left:1350px;top:586.5px;width:545.5px;height:230px"></div>
<div class="t" style="left:245.4px;top:604.98px;font-size:11.6px;color:#303030;font-weight:400;-webkit-text-stroke:0.348px #303030;letter-spacing:0.42px"><span class="dot">Total sales by sales channel</span></div>

<svg style="left:0;top:0" width="1919" height="949"><path d="M363.99,643.86 A70.65,70.65 0 1 1 295.51,693.61" stroke="#38a8e8" stroke-width="15.5" fill="none"/><path d="M296.08,691.85 A70.65,70.65 0 0 1 318.16,659.91" stroke="#7b2ae0" stroke-width="15.5" fill="none"/><path d="M319.60,658.75 A70.65,70.65 0 0 1 339.53,647.86" stroke="#6d6ee3" stroke-width="15.5" fill="none"/><path d="M341.40,647.23 A70.65,70.65 0 0 1 351.34,644.82" stroke="#d93db6" stroke-width="15.5" fill="none"/><path d="M353.17,644.54 A70.65,70.65 0 0 1 357.46,644.07" stroke="#22b3a8" stroke-width="15.5" fill="none"/><path d="M358.81,643.97 A70.65,70.65 0 0 1 359.67,643.93" stroke="#8f62c9" stroke-width="15.5" fill="none"/><path d="M360.66,643.89 A70.65,70.65 0 0 1 361.40,643.87" stroke="#d58ad0" stroke-width="15.5" fill="none"/></svg>
<div class="t" style="left:363.2px;transform:translateX(-50%);top:698.59px;font-size:18.2px;color:#303030;font-weight:400;-webkit-text-stroke:0.25px #303030">CA$5.7T</div>

<svg style="left:351px;top:722.8000000000001px" width="5.4" height="5.4" viewBox="0 0 5.4 5.4"><path d="M0.9 4.50 L3.20 2.2" stroke="#29845a" stroke-width="1.25" fill="none" stroke-linecap="round"/><path d="M1.73 0.4 L5.00 0.4 L5.00 3.67 Z" fill="#29845a"/></svg>
<div class="t" style="left:360px;top:721.24px;font-size:9.4px;color:#29845a;font-weight:400;-webkit-text-stroke:0.282px #29845a;letter-spacing:0.45px">2%</div>

<div class="a" style="left:468.8px;top:660.60px;width:11px;height:11px;background:#38a8e8;border-radius:2px"></div>
<div class="t" style="left:483.3px;top:660.60px;font-size:11.1px;color:#616161;font-weight:400;letter-spacing:0.1px">Online Store</div>

<div class="t" style="right:1228.5px;top:660.69px;font-size:11px;color:#616161;font-weight:400;">CA$4.6T</div>

<svg style="left:695px;top:663.0px" width="5.4" height="5.4" viewBox="0 0 5.4 5.4"><path d="M0.9 4.50 L3.20 2.2" stroke="#29845a" stroke-width="1.25" fill="none" stroke-linecap="round"/><path d="M1.73 0.4 L5.00 0.4 L5.00 3.67 Z" fill="#29845a"/></svg>
<div class="t" style="left:704px;top:661.44px;font-size:9.4px;color:#29845a;font-weight:400;-webkit-text-stroke:0.282px #29845a;letter-spacing:0.45px">3%</div>

<div class="a" style="left:468.8px;top:685.60px;width:11px;height:11px;background:#7b2ae0;border-radius:2px"></div>
<div class="t" style="left:483.3px;top:685.50px;font-size:11.1px;color:#616161;font-weight:400;letter-spacing:0.1px">Alvio Platform Connector</div>

<div class="t" style="right:1228.5px;top:685.59px;font-size:11px;color:#616161;font-weight:400;">CA$555.78</div>

<svg style="left:695px;top:687.9px" width="5.4" height="5.4" viewBox="0 0 5.4 5.4"><path d="M0.9 0.9 L3.20 3.20" stroke="#4a4a4a" stroke-width="1.25" fill="none" stroke-linecap="round"/><path d="M1.73 5.00 L5.00 5.00 L5.00 1.73 Z" fill="#4a4a4a"/></svg>
<div class="t" style="left:704px;top:686.34px;font-size:9.4px;color:#4a4a4a;font-weight:400;-webkit-text-stroke:0.282px #4a4a4a;letter-spacing:0.45px">12%</div>

<div class="a" style="left:468.8px;top:710.60px;width:11px;height:11px;background:#6d6ee3;border-radius:2px"></div>
<div class="t" style="left:483.3px;top:710.40px;font-size:11.1px;color:#616161;font-weight:400;letter-spacing:0.1px">Modern Dropship</div>

<div class="t" style="right:1228.5px;top:710.49px;font-size:11px;color:#616161;font-weight:400;">CA$315.86</div>

<div class="a" style="left:695.2px;top:716.00px;width:10.4px;height:1.3px;background:#616161"></div>
<div class="a" style="left:468.8px;top:735.60px;width:11px;height:11px;background:#d93db6;border-radius:2px"></div>
<div class="t" style="left:483.3px;top:735.30px;font-size:11.1px;color:#616161;font-weight:400;letter-spacing:0.1px">Juo Subscriptions</div>

<div class="t" style="right:1228.5px;top:735.39px;font-size:11px;color:#616161;font-weight:400;">CA$155.39</div>

<svg style="left:695px;top:737.7px" width="5.4" height="5.4" viewBox="0 0 5.4 5.4"><path d="M0.9 0.9 L3.20 3.20" stroke="#4a4a4a" stroke-width="1.25" fill="none" stroke-linecap="round"/><path d="M1.73 5.00 L5.00 5.00 L5.00 1.73 Z" fill="#4a4a4a"/></svg>
<div class="t" style="left:704px;top:736.14px;font-size:9.4px;color:#4a4a4a;font-weight:400;-webkit-text-stroke:0.282px #4a4a4a;letter-spacing:0.45px">24%</div>

<div class="t" style="left:474.7px;top:767.53px;font-size:10px;color:#616161;font-weight:400;">+4 more</div>

<div class="t" style="left:805px;top:604.98px;font-size:11.6px;color:#303030;font-weight:400;-webkit-text-stroke:0.348px #303030;letter-spacing:0.42px"><span class="dot">Average order value over time</span></div>

<div class="t" style="left:804.8px;top:629.56px;font-size:18px;color:#303030;font-weight:400;-webkit-text-stroke:0.540px #303030;letter-spacing:0.5px">CA$85.83</div>

<svg style="left:896.8px;top:635.6px" width="5.4" height="5.4" viewBox="0 0 5.4 5.4"><path d="M0.9 4.50 L3.20 2.2" stroke="#29845a" stroke-width="1.25" fill="none" stroke-linecap="round"/><path d="M1.73 0.4 L5.00 0.4 L5.00 3.67 Z" fill="#29845a"/></svg>
<div class="t" style="left:905.8px;top:634.04px;font-size:9.4px;color:#29845a;font-weight:400;-webkit-text-stroke:0.282px #29845a;letter-spacing:0.45px">71%</div>

<div class="a" style="left:860.0px;top:667.30px;width:457.0px;height:1px;background:#efefef"></div>
<div class="t" style="left:806.9px;top:663.88px;font-size:10.3px;color:#616161;font-weight:400;">CA$2T</div>

<div class="a" style="left:860.0px;top:737.80px;width:457.0px;height:1px;background:#efefef"></div>
<div class="t" style="left:806.9px;top:734.38px;font-size:10.3px;color:#616161;font-weight:400;">CA$0</div>

<div class="t" style="left:860.0px;transform:translateX(-50%);top:752.50px;font-size:9.8px;color:#616161;font-weight:400;">11 Feb</div>

<div class="t" style="left:911.3483146067416px;transform:translateX(-50%);top:752.50px;font-size:9.8px;color:#616161;font-weight:400;">21 Feb</div>

<div class="t" style="left:962.6966292134831px;transform:translateX(-50%);top:752.50px;font-size:9.8px;color:#616161;font-weight:400;">3 Mar</div>

<div class="t" style="left:1014.0449438202247px;transform:translateX(-50%);top:752.50px;font-size:9.8px;color:#616161;font-weight:400;">13 Mar</div>

<div class="t" style="left:1065.3932584269662px;transform:translateX(-50%);top:752.50px;font-size:9.8px;color:#616161;font-weight:400;">23 Mar</div>

<div class="t" style="left:1116.741573033708px;transform:translateX(-50%);top:752.50px;font-size:9.8px;color:#616161;font-weight:400;">2 Apr</div>

<div class="t" style="left:1168.0898876404494px;transform:translateX(-50%);top:752.50px;font-size:9.8px;color:#616161;font-weight:400;">12 Apr</div>

<div class="t" style="left:1219.438202247191px;transform:translateX(-50%);top:752.50px;font-size:9.8px;color:#616161;font-weight:400;">22 Apr</div>

<div class="t" style="left:1270.7865168539327px;transform:translateX(-50%);top:752.50px;font-size:9.8px;color:#616161;font-weight:400;">2 May</div>

<svg style="left:0;top:0" width="1919" height="949"><path d="M860.00,735.45C863.70,735.45 861.44,736.35 865.13,736.35C868.83,736.35 866.57,736.65 870.27,736.65C873.97,736.65 871.71,737.60 875.40,737.60C879.10,737.60 876.84,737.40 880.54,737.40C884.24,737.40 881.98,734.95 885.67,734.95C889.37,734.95 887.11,736.10 890.81,736.10C894.51,736.10 892.25,738.60 895.94,738.60C899.64,738.60 897.38,735.90 901.08,735.90C904.78,735.90 902.52,736.50 906.21,736.50C909.91,736.50 907.65,737.60 911.35,737.60C915.05,737.60 912.79,738.50 916.48,738.50C920.18,738.50 917.92,737.40 921.62,737.40C925.32,737.40 923.06,736.80 926.75,736.80C930.45,736.80 928.19,737.10 931.89,737.10C935.58,737.10 933.33,737.00 937.02,737.00C940.72,737.00 938.46,737.10 942.16,737.10C945.85,737.10 943.60,738.50 947.29,738.50C950.99,738.50 948.73,737.40 952.43,737.40C956.12,737.40 953.86,738.60 957.56,738.60C961.26,738.60 959.00,737.60 962.70,737.60C966.39,737.60 964.13,737.50 967.83,737.50C971.53,737.50 969.27,738.60 972.97,738.60C976.66,738.60 974.40,737.10 978.10,737.10C981.80,737.10 979.54,735.85 983.24,735.85C986.93,735.85 984.67,737.10 988.37,737.10C992.07,737.10 989.81,737.60 993.51,737.60C997.20,737.60 994.94,737.60 998.64,737.60C1002.34,737.60 1000.08,736.60 1003.78,736.60C1007.47,736.60 1005.21,734.65 1008.91,734.65C1012.61,734.65 1010.35,736.60 1014.04,736.60C1017.74,736.60 1015.48,737.40 1019.18,737.40C1022.88,737.40 1020.62,736.00 1024.31,736.00C1028.01,736.00 1025.75,735.20 1029.45,735.20C1033.15,735.20 1030.89,737.10 1034.58,737.10C1038.28,737.10 1036.02,738.60 1039.72,738.60C1043.42,738.60 1041.16,735.70 1044.85,735.70C1048.55,735.70 1046.29,735.25 1049.99,735.25C1053.69,735.25 1051.43,737.60 1055.12,737.60C1058.82,737.60 1056.56,736.50 1060.26,736.50C1063.96,736.50 1061.70,738.60 1065.39,738.60C1069.09,738.60 1066.83,737.55 1070.53,737.55C1074.23,737.55 1071.97,738.60 1075.66,738.60C1079.36,738.60 1077.10,736.45 1080.80,736.45C1084.49,736.45 1082.24,737.85 1085.93,737.85C1089.63,737.85 1087.37,735.80 1091.07,735.80C1094.76,735.80 1092.51,737.10 1096.20,737.10C1099.90,737.10 1097.64,738.30 1101.34,738.30C1105.03,738.30 1102.77,736.85 1106.47,736.85C1110.17,736.85 1107.91,738.60 1111.61,738.60C1115.30,738.60 1113.04,737.40 1116.74,737.40C1120.44,737.40 1118.18,736.50 1121.88,736.50C1125.57,736.50 1123.31,738.60 1127.01,738.60C1130.71,738.60 1128.45,735.25 1132.15,735.25C1135.84,735.25 1133.58,736.00 1137.28,736.00C1140.98,736.00 1138.72,736.60 1142.42,736.60C1146.11,736.60 1143.85,735.80 1147.55,735.80C1151.25,735.80 1148.99,736.75 1152.69,736.75C1156.38,736.75 1154.12,737.40 1157.82,737.40C1161.52,737.40 1159.26,735.90 1162.96,735.90C1166.65,735.90 1164.39,736.40 1168.09,736.40C1171.79,736.40 1169.53,738.40 1173.22,738.40C1176.92,738.40 1174.66,735.05 1178.36,735.05C1182.06,735.05 1179.80,735.15 1183.49,735.15C1187.19,735.15 1184.93,737.30 1188.63,737.30C1192.33,737.30 1190.07,737.10 1193.76,737.10C1197.46,737.10 1195.20,738.60 1198.90,738.60C1202.60,738.60 1200.34,737.60 1204.03,737.60C1207.73,737.60 1205.47,737.40 1209.17,737.40C1212.87,737.40 1210.61,736.85 1214.30,736.85C1218.00,736.85 1215.74,737.15 1219.44,737.15C1223.14,737.15 1220.88,737.65 1224.57,737.65C1228.27,737.65 1226.01,737.10 1229.71,737.10C1233.40,737.10 1231.15,737.10 1234.84,737.10C1238.54,737.10 1236.28,737.60 1239.98,737.60C1243.67,737.60 1241.42,737.60 1245.11,737.60C1248.81,737.60 1246.55,737.10 1250.25,737.10C1253.94,737.10 1251.68,737.60 1255.38,737.60C1259.08,737.60 1256.82,737.60 1260.52,737.60C1264.21,737.60 1261.95,737.10 1265.65,737.10C1269.35,737.10 1267.09,735.65 1270.79,735.65C1274.48,735.65 1272.22,737.30 1275.92,737.30C1279.62,737.30 1277.36,737.10 1281.06,737.10C1284.75,737.10 1282.49,736.00 1286.19,736.00C1289.89,736.00 1287.63,737.60 1291.33,737.60C1295.02,737.60 1292.76,737.30 1296.46,737.30C1300.16,737.30 1297.90,736.60 1301.60,736.60C1305.29,736.60 1303.03,735.80 1306.73,735.80C1310.43,735.80 1308.17,737.30 1311.87,737.30C1315.56,737.30 1313.30,737.10 1317.00,737.10" stroke="#b9d3e2" stroke-width="1.4" fill="none" stroke-dasharray="0.1 3" stroke-linecap="round"/><path d="M860.00,735.80C863.70,735.80 861.44,737.60 865.13,737.60C868.83,737.60 866.57,738.20 870.27,738.20C873.97,738.20 871.71,739.10 875.40,739.10C879.10,739.10 876.84,738.70 880.54,738.70C884.24,738.70 881.98,734.80 885.67,734.80C889.37,734.80 887.11,736.10 890.81,736.10C894.51,736.10 892.25,739.10 895.94,739.10C899.64,739.10 897.38,736.70 901.08,736.70C904.78,736.70 902.52,738.90 906.21,738.90C909.91,738.90 907.65,739.10 911.35,739.10C915.05,739.10 912.79,738.90 916.48,738.90C920.18,738.90 917.92,736.70 921.62,736.70C925.32,736.70 923.06,738.50 926.75,738.50C930.45,738.50 928.19,739.10 931.89,739.10C935.58,739.10 933.33,737.90 937.02,737.90C940.72,737.90 938.46,736.10 942.16,736.10C945.85,736.10 943.60,738.90 947.29,738.90C950.99,738.90 948.73,736.70 952.43,736.70C956.12,736.70 953.86,739.10 957.56,739.10C961.26,739.10 959.00,739.10 962.70,739.10C966.39,739.10 964.13,738.90 967.83,738.90C971.53,738.90 969.27,739.10 972.97,739.10C976.66,739.10 974.40,739.10 978.10,739.10C981.80,739.10 979.54,737.60 983.24,737.60C986.93,737.60 984.67,739.10 988.37,739.10C992.07,739.10 989.81,739.10 993.51,739.10C997.20,739.10 994.94,739.10 998.64,739.10C1002.34,739.10 1000.08,739.10 1003.78,739.10C1007.47,739.10 1005.21,734.20 1008.91,734.20C1012.61,734.20 1010.35,687.60 1014.04,687.60C1017.74,687.60 1015.48,736.70 1019.18,736.70C1022.88,736.70 1020.62,736.90 1024.31,736.90C1028.01,736.90 1025.75,736.30 1029.45,736.30C1033.15,736.30 1030.89,739.10 1034.58,739.10C1038.28,739.10 1036.02,739.10 1039.72,739.10C1043.42,739.10 1041.16,737.30 1044.85,737.30C1048.55,737.30 1046.29,736.40 1049.99,736.40C1053.69,736.40 1051.43,739.10 1055.12,739.10C1058.82,739.10 1056.56,738.90 1060.26,738.90C1063.96,738.90 1061.70,739.10 1065.39,739.10C1069.09,739.10 1066.83,737.00 1070.53,737.00C1074.23,737.00 1071.97,739.10 1075.66,739.10C1079.36,739.10 1077.10,737.80 1080.80,737.80C1084.49,737.80 1082.24,737.60 1085.93,737.60C1089.63,737.60 1087.37,737.50 1091.07,737.50C1094.76,737.50 1092.51,739.10 1096.20,739.10C1099.90,739.10 1097.64,738.50 1101.34,738.50C1105.03,738.50 1102.77,735.60 1106.47,735.60C1110.17,735.60 1107.91,739.10 1111.61,739.10C1115.30,739.10 1113.04,738.70 1116.74,738.70C1120.44,738.70 1118.18,736.90 1121.88,736.90C1125.57,736.90 1123.31,739.10 1127.01,739.10C1130.71,739.10 1128.45,735.40 1132.15,735.40C1135.84,735.40 1133.58,736.90 1137.28,736.90C1140.98,736.90 1138.72,738.10 1142.42,738.10C1146.11,738.10 1143.85,736.50 1147.55,736.50C1151.25,736.50 1148.99,735.40 1152.69,735.40C1156.38,735.40 1154.12,738.70 1157.82,738.70C1161.52,738.70 1159.26,737.70 1162.96,737.70C1166.65,737.70 1164.39,738.70 1168.09,738.70C1171.79,738.70 1169.53,738.70 1173.22,738.70C1176.92,738.70 1174.66,736.00 1178.36,736.00C1182.06,736.00 1179.80,736.20 1183.49,736.20C1187.19,736.20 1184.93,736.50 1188.63,736.50C1192.33,736.50 1190.07,739.10 1193.76,739.10C1197.46,739.10 1195.20,739.10 1198.90,739.10C1202.60,739.10 1200.34,729.70 1204.03,729.70C1207.73,729.70 1205.47,738.70 1209.17,738.70C1212.87,738.70 1210.61,735.60 1214.30,735.60C1218.00,735.60 1215.74,736.20 1219.44,736.20C1223.14,736.20 1220.88,737.20 1224.57,737.20C1228.27,737.20 1226.01,739.10 1229.71,739.10C1233.40,739.10 1231.15,739.10 1234.84,739.10C1238.54,739.10 1236.28,739.10 1239.98,739.10C1243.67,739.10 1241.42,739.10 1245.11,739.10C1248.81,739.10 1246.55,739.10 1250.25,739.10C1253.94,739.10 1251.68,739.10 1255.38,739.10C1259.08,739.10 1256.82,739.10 1260.52,739.10C1264.21,739.10 1261.95,739.10 1265.65,739.10C1269.35,739.10 1267.09,736.20 1270.79,736.20C1274.48,736.20 1272.22,736.50 1275.92,736.50C1279.62,736.50 1277.36,739.10 1281.06,739.10C1284.75,739.10 1282.49,736.90 1286.19,736.90C1289.89,736.90 1287.63,739.10 1291.33,739.10C1295.02,739.10 1292.76,736.50 1296.46,736.50C1300.16,736.50 1297.90,739.10 1301.60,739.10C1305.29,739.10 1303.03,737.50 1306.73,737.50C1310.43,737.50 1308.17,736.50 1311.87,736.50C1315.56,736.50 1313.30,738.10 1317.00,738.10" stroke="#3994cb" stroke-width="1.9" fill="none"/></svg>
<div class="a" style="left:929px;top:790.5px;width:11px;height:2px;background:#3a9bd2;border-radius:1px"></div>
<div class="t" style="left:945.5px;top:786.92px;font-size:9.9px;color:#616161;font-weight:400;">11 Feb&#8211;11 May 2025</div>

<svg style="left:1052px;top:790px" width="12" height="3"><path d="M1 1.2 L11 1.2" stroke="#a9bcc7" stroke-width="1.6" stroke-dasharray="0.1 3.6" stroke-linecap="round"/></svg>
<div class="t" style="left:1068.6px;top:786.92px;font-size:9.9px;color:#616161;font-weight:400;letter-spacing:0.12px">13 Nov 2024&#8211;10 Feb 2025</div>

<div class="t" style="left:1365px;top:604.98px;font-size:11.6px;color:#303030;font-weight:400;-webkit-text-stroke:0.348px #303030;letter-spacing:0.42px"><span class="dot">Total sales by product</span></div>

<div class="t" style="left:1364.7px;top:632.10px;font-size:10.4px;color:#616161;font-weight:400;">Farm Fund (Donation) - Help Sharad Rebuild - Nepal Ilam &#183; tearebellion &#183; None</div>

<div class="a" style="left:1364.7px;top:645.6px;width:394.8px;height:30px;background:#36a7ea;border-radius:0 3px 3px 0"></div>
<div class="a" style="left:1364.7px;top:676px;width:1.3px;height:32px;background:#dde6ee"></div>
<div class="t" style="left:1768.7px;top:657.65px;font-size:10.1px;color:#616161;font-weight:400;">CA$1,582.11</div>

<div class="a" style="left:1836px;top:660.5px;width:11px;height:1.3px;background:#616161"></div>
<div class="t" style="left:1374.5px;top:688.15px;font-size:10.1px;color:#616161;font-weight:400;">CA$0.00</div>

<div class="t" style="left:1364.7px;top:726.90px;font-size:10.4px;color:#616161;font-weight:400;">Organic Matcha &#183; MATCHA GREEN TEA &#183; None</div>

<div class="a" style="left:1364.7px;top:740.2px;width:113px;height:29.2px;background:#36a7ea;border-radius:0 3px 3px 0"></div>
<div class="t" style="left:1487px;top:751.10px;font-size:10.4px;color:#616161;font-weight:400;">CA$452.96</div>

<svg style="left:1549px;top:753.1px" width="5.4" height="5.4" viewBox="0 0 5.4 5.4"><path d="M0.9 4.50 L3.20 2.2" stroke="#29845a" stroke-width="1.25" fill="none" stroke-linecap="round"/><path d="M1.73 0.4 L5.00 0.4 L5.00 3.67 Z" fill="#29845a"/></svg>
<div class="t" style="left:1558px;top:751.54px;font-size:9.4px;color:#29845a;font-weight:400;-webkit-text-stroke:0.282px #29845a;letter-spacing:0.45px">167%</div>

<div class="a" style="left:1364.7px;top:772.3px;width:42.2px;height:29.2px;background:#90c6ea;border-radius:0 3px 3px 0"></div>
<div class="t" style="left:1416px;top:782.90px;font-size:10.4px;color:#616161;font-weight:400;">CA$169.66</div>

<div class="card" style="left:230px;top:830px;width:545.5px;height:140px"></div>
<div class="card" style="left:790px;top:830px;width:545.5px;height:140px"></div>
<div class="card" style="left:1350px;top:830px;width:545.5px;height:140px"></div>
<div class="t" style="left:245.4px;top:847.68px;font-size:11.6px;color:#303030;font-weight:400;-webkit-text-stroke:0.348px #303030;letter-spacing:0.42px"><span class="dot">Sessions over time</span></div>

<div class="t" style="left:245.2px;top:872.69px;font-size:17.5px;color:#303030;font-weight:400;-webkit-text-stroke:0.525px #303030;letter-spacing:-0.3px">21,991</div>

<svg style="left:304px;top:878.3000000000001px" width="5.4" height="5.4" viewBox="0 0 5.4 5.4"><path d="M0.9 0.9 L3.20 3.20" stroke="#4a4a4a" stroke-width="1.25" fill="none" stroke-linecap="round"/><path d="M1.73 5.00 L5.00 5.00 L5.00 1.73 Z" fill="#4a4a4a"/></svg>
<div class="t" style="left:313px;top:876.74px;font-size:9.4px;color:#4a4a4a;font-weight:400;-webkit-text-stroke:0.282px #4a4a4a;letter-spacing:0.45px">2%</div>

<div class="a" style="left:287px;top:910.5px;width:470px;height:1px;background:#ebebeb"></div>
<div class="t" style="left:247px;top:906.48px;font-size:10.3px;color:#616161;font-weight:400;">600</div>

<div class="t" style="left:805px;top:847.68px;font-size:11.6px;color:#303030;font-weight:400;-webkit-text-stroke:0.348px #303030;letter-spacing:0.42px"><span class="dot">Conversion rate over time</span></div>

<div class="t" style="left:804.8px;top:872.69px;font-size:17.5px;color:#303030;font-weight:400;-webkit-text-stroke:0.525px #303030;letter-spacing:0px">0.21%</div>

<svg style="left:864px;top:878.3000000000001px" width="5.4" height="5.4" viewBox="0 0 5.4 5.4"><path d="M0.9 0.9 L3.20 3.20" stroke="#4a4a4a" stroke-width="1.25" fill="none" stroke-linecap="round"/><path d="M1.73 5.00 L5.00 5.00 L5.00 1.73 Z" fill="#4a4a4a"/></svg>
<div class="t" style="left:873px;top:876.74px;font-size:9.4px;color:#4a4a4a;font-weight:400;-webkit-text-stroke:0.282px #4a4a4a;letter-spacing:0.45px">39%</div>

<div class="a" style="left:843px;top:910.5px;width:474px;height:1px;background:#ebebeb"></div>
<div class="t" style="left:806.9px;top:906.48px;font-size:10.3px;color:#616161;font-weight:400;">3%</div>

<div class="t" style="left:1365px;top:847.68px;font-size:11.6px;color:#303030;font-weight:400;-webkit-text-stroke:0.348px #303030;letter-spacing:0.42px"><span class="dot">Conversion rate breakdown</span></div>

<div class="t" style="left:1364.8px;top:872.69px;font-size:17.5px;color:#303030;font-weight:400;-webkit-text-stroke:0.525px #303030;letter-spacing:0px">0.21%</div>

<svg style="left:1423.5px;top:878.3000000000001px" width="5.4" height="5.4" viewBox="0 0 5.4 5.4"><path d="M0.9 0.9 L3.20 3.20" stroke="#4a4a4a" stroke-width="1.25" fill="none" stroke-linecap="round"/><path d="M1.73 5.00 L5.00 5.00 L5.00 1.73 Z" fill="#4a4a4a"/></svg>
<div class="t" style="left:1432.5px;top:876.74px;font-size:9.4px;color:#4a4a4a;font-weight:400;-webkit-text-stroke:0.282px #4a4a4a;letter-spacing:0.45px">39%</div>

<div class="a" style="left:1500.6px;top:905px;width:1px;height:44px;background:#ebebeb"></div>
<div class="a" style="left:1638px;top:905px;width:1px;height:44px;background:#ebebeb"></div>
<div class="a" style="left:1775px;top:905px;width:1px;height:44px;background:#ebebeb"></div>
<div class="a" style="left:1364px;top:911px;width:14px;height:14px;border-radius:50%;background:#f1f1f1"></div>
<svg style="left:1365px;top:911px" width="12" height="14" viewBox="0 0 12 14"><path d="M7.5 1 L4 6 L8 7.5 L4.5 13" stroke="#303030" stroke-width="1.4" fill="none"/><path d="M2 5.5 L10 5.5 M2 8.5 L10 8.5" stroke="#303030" stroke-width="1.1"/></svg>
<div class="t" style="left:1383px;top:914.02px;font-size:11.2px;color:#4a4a4a;font-weight:400;">Sessions</div>

<div class="t" style="left:1511px;top:914.02px;font-size:11.2px;color:#4a4a4a;font-weight:400;">Added to cart</div>

<div class="t" style="left:1648.2px;top:914.02px;font-size:11.2px;color:#4a4a4a;font-weight:400;">Reached checkout</div>

<div class="t" style="left:1785.3px;top:914.02px;font-size:11.2px;color:#4a4a4a;font-weight:400;">Completed che...</div>

<div class="t" style="left:1365px;top:932.42px;font-size:12.5px;color:#303030;font-weight:400"><span style="-webkit-text-stroke:0.38px #303030">100%</span><span style="font-weight:400;color:#8a8a8a;font-size:12.5px;margin-left:5px">21,991</span></div>
<div class="t" style="left:1511px;top:932.42px;font-size:12.5px;color:#303030;font-weight:400"><span style="-webkit-text-stroke:0.38px #303030">0.68%</span><span style="font-weight:400;color:#8a8a8a;font-size:12.5px;margin-left:5px">149</span></div>
<div class="t" style="left:1648.2px;top:932.42px;font-size:12.5px;color:#303030;font-weight:400"><span style="-webkit-text-stroke:0.38px #303030">0.51%</span><span style="font-weight:400;color:#8a8a8a;font-size:12.5px;margin-left:5px">113</span></div>
<div class="t" style="left:1785.3px;top:932.42px;font-size:12.5px;color:#303030;font-weight:400"><span style="-webkit-text-stroke:0.38px #303030">0.21%</span><span style="font-weight:400;color:#8a8a8a;font-size:12.5px;margin-left:5px">46</span></div>
<div class="a" style="left:1912px;top:940px;width:0;height:0;border-left:3px solid transparent;border-right:3px solid transparent;border-bottom:0;border-top:4px solid #a3a3a3"></div>
<div class="a" style="left:0;top:946.6px;width:1919px;height:1.6px;background:#c3c9d6"></div>
<div class="a" style="left:0;top:948.2px;width:1919px;height:1px;background:#e9edf5"></div>
</body></html>
